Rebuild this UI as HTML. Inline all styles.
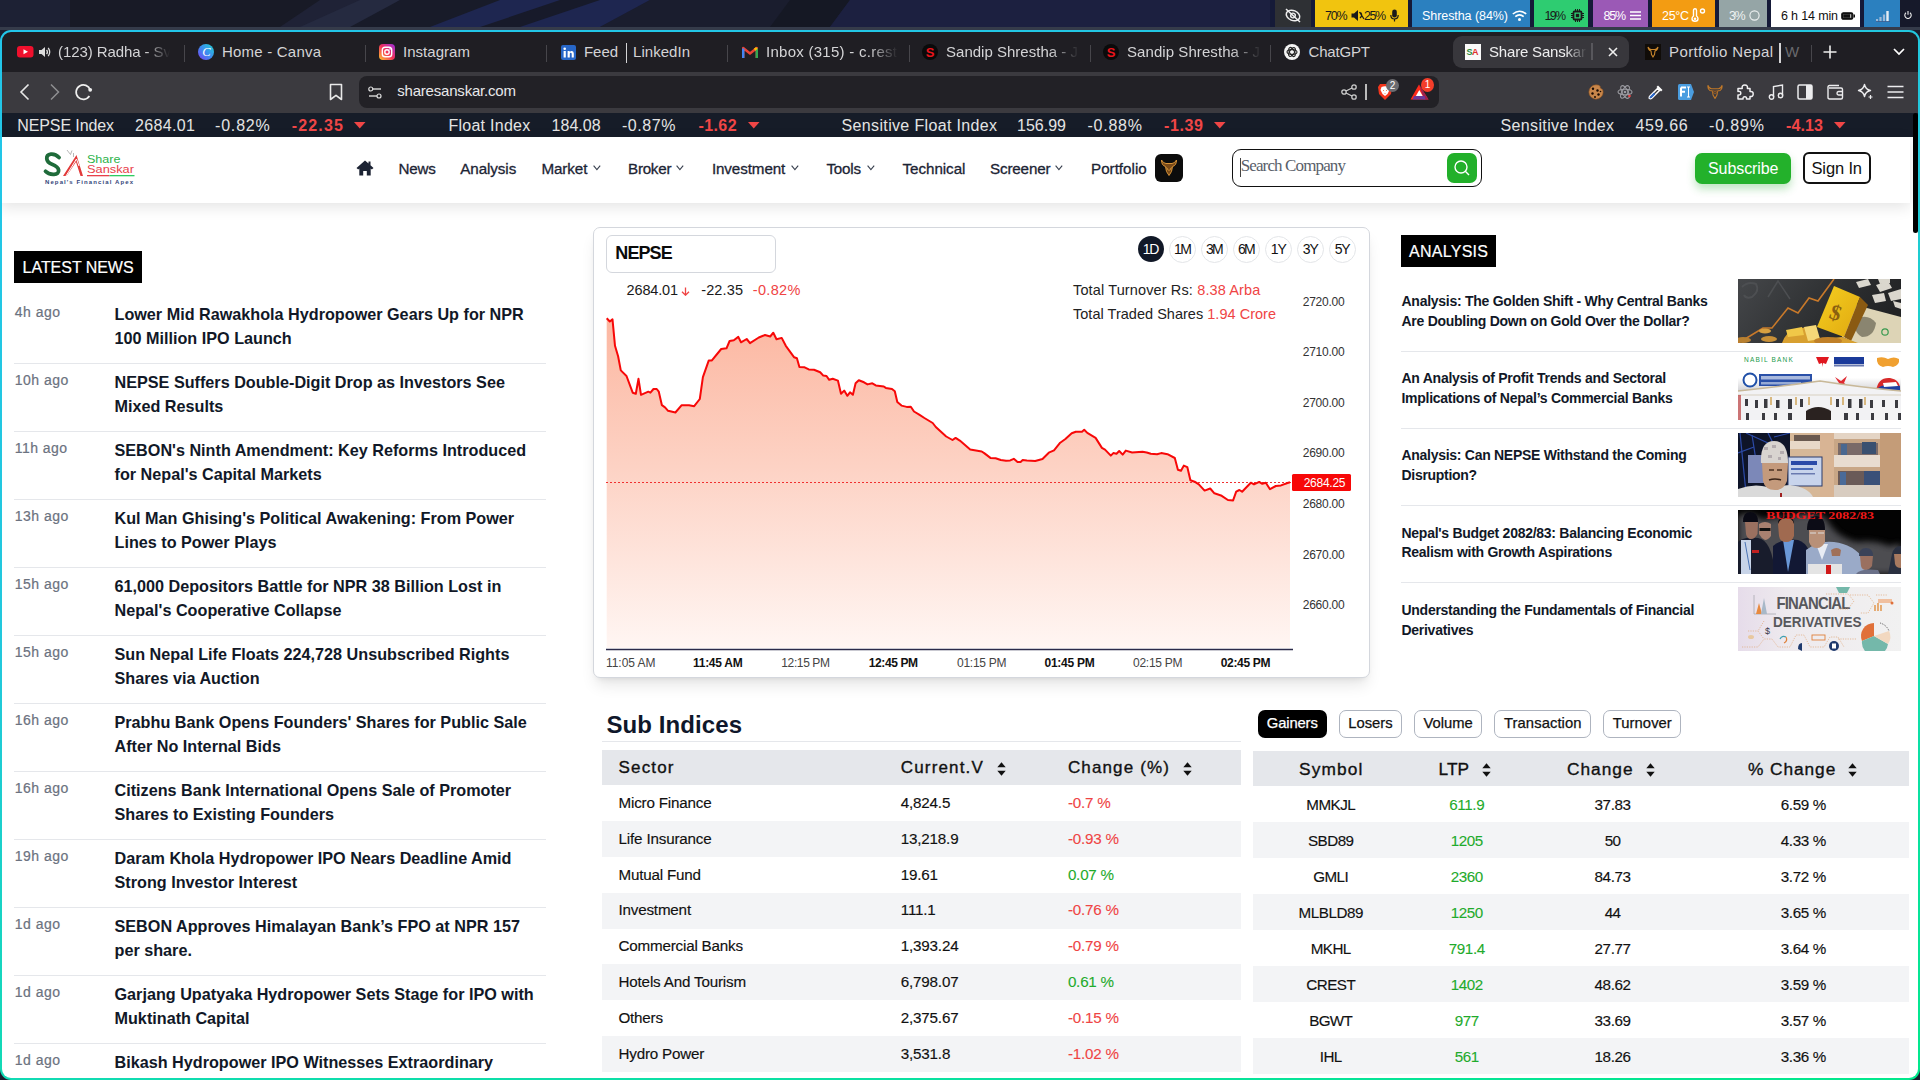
<!DOCTYPE html>
<html><head><meta charset="utf-8">
<style>
*{margin:0;padding:0;box-sizing:border-box}
html,body{width:1920px;height:1080px;overflow:hidden;background:#1b1e2e;font-family:"Liberation Sans",sans-serif}
.a{position:absolute;white-space:nowrap}
#win{position:absolute;left:0;top:30px;width:1920px;height:1050px;border-radius:11px;background:linear-gradient(165deg,#22c6ea 0%,#22c8dc 40%,#10dcb0 70%,#02e88c 100%)}
#inner{position:absolute;left:0;top:0;width:1920px;height:1080px;clip-path:inset(32px 2px 2px 2px round 9px)}
.fade{overflow:hidden}
</style></head><body>
<svg class="a" style="left:0;top:0" width="1920" height="30">
<rect width="1920" height="30" fill="#1c1f38"/>
<rect width="70" height="30" fill="#1d2134"/>
<rect x="70" width="250" height="30" fill="#181a26"/>
<path d="M320 0 L360 0 L320 27 L280 27Z" fill="#1f2236"/>
<path d="M360 0 L400 0 L360 27 L300 27Z" fill="#252a40"/>
<path d="M400 0 L520 0 L470 27 L350 27Z" fill="#181b29"/>
<path d="M500 0 L650 0 L600 27 L430 27Z" fill="#1e2650"/>
<path d="M560 0 L600 0 L520 27 L480 27Z" fill="#171a2a"/>
<path d="M650 0 L790 0 L780 27 L600 27Z" fill="#1a1d2e"/>
<path d="M790 0 L850 0 L830 27 L770 27Z" fill="#151824"/>
<path d="M850 0 L1275 0 L1275 27 L830 27Z" fill="#1c2040"/>
<rect x="1270" width="650" height="27" fill="#151a38"/>
<rect y="27" width="1920" height="3" fill="#353b4a"/>
</svg>
<div class="a" style="left:1275px;top:0px;width:36px;height:27px;background:#2e3034;"></div>
<div class="a" style="left:1315px;top:0px;width:93px;height:27px;background:#f1c40f;"></div>
<div class="a" style="left:1412px;top:0px;width:118px;height:27px;background:#2b80bf;"></div>
<div class="a" style="left:1534px;top:0px;width:54px;height:27px;background:#2ecc71;"></div>
<div class="a" style="left:1593px;top:0px;width:55px;height:27px;background:#9b59b6;"></div>
<div class="a" style="left:1652px;top:0px;width:63px;height:27px;background:#f39c12;"></div>
<div class="a" style="left:1719px;top:0px;width:48px;height:27px;background:#95a5a6;"></div>
<div class="a" style="left:1771px;top:0px;width:89px;height:27px;background:#ffffff;"></div>
<div class="a" style="left:1864px;top:0px;width:36px;height:27px;background:#2b80bf;"></div>
<div class="a" style="left:1900px;top:0px;width:20px;height:27px;background:#16192a;"></div>
<svg class="a" style="left:1284px;top:8px" width="18" height="15" viewBox="0 0 18 15"><g transform="rotate(22 9 7.5)"><ellipse cx="9" cy="7.5" rx="7" ry="5" fill="none" stroke="#eee" stroke-width="1.5"/><circle cx="9" cy="7.5" r="2.3" fill="none" stroke="#eee" stroke-width="1.4"/></g><path d="M2 1 L16 14" stroke="#eee" stroke-width="1.5"/></svg>
<div class="a" style="left:1325.00px;top:7.67px;font-size:12.5px;line-height:16px;color:#1a1a1a;letter-spacing:-1.159px;">70%</div>
<svg class="a" style="left:1351px;top:9px" width="14" height="13" viewBox="0 0 14 13"><path d="M0.5 4.5 H3 L7 1 V12 L3 8.5 H0.5Z" fill="#1a1a1a"/><path d="M8.5 3 L13 10 M9 9 Q12 6.5 9.5 3.5" fill="none" stroke="#1a1a1a" stroke-width="1.3"/></svg>
<div class="a" style="left:1364.00px;top:7.67px;font-size:12.5px;line-height:16px;color:#1a1a1a;letter-spacing:-1.509px;">25%</div>
<svg class="a" style="left:1390px;top:9px" width="9" height="13" viewBox="0 0 9 13"><rect x="2.2" y="0.5" width="4.6" height="8" rx="2.3" fill="#1a1a1a"/><path d="M0.8 6 Q0.8 10 4.5 10 Q8.2 10 8.2 6 M4.5 10 V12.5" fill="none" stroke="#1a1a1a" stroke-width="1.2"/></svg>
<div class="a" style="left:1422.00px;top:7.67px;font-size:12.5px;line-height:16px;color:#ffffff;letter-spacing:-0.065px;">Shrestha (84%)</div>
<svg class="a" style="left:1512px;top:10px" width="15" height="11" viewBox="0 0 15 11"><path d="M0.8 4 Q7.5 -1.5 14.2 4" fill="none" stroke="#fff" stroke-width="1.6"/><path d="M3.3 6.6 Q7.5 3 11.7 6.6" fill="none" stroke="#fff" stroke-width="1.6"/><circle cx="7.5" cy="9.5" r="1.5" fill="#fff"/></svg>
<div class="a" style="left:1544.50px;top:7.67px;font-size:12.5px;line-height:16px;color:#1a1a1a;letter-spacing:-1.759px;">19%</div>
<svg class="a" style="left:1571px;top:9px" width="13" height="13" viewBox="0 0 13 13"><rect x="2.5" y="2.5" width="8" height="8" rx="1" fill="none" stroke="#1a1a1a" stroke-width="1.8"/><rect x="4.8" y="4.8" width="3.4" height="3.4" fill="#1a1a1a"/><path d="M4.5 0 V2.5 M6.5 0 V2.5 M8.5 0 V2.5 M4.5 10.5 V13 M6.5 10.5 V13 M8.5 10.5 V13 M0 4.5 H2.5 M0 6.5 H2.5 M0 8.5 H2.5 M10.5 4.5 H13 M10.5 6.5 H13 M10.5 8.5 H13" stroke="#1a1a1a" stroke-width="1"/></svg>
<div class="a" style="left:1603.40px;top:7.67px;font-size:12.5px;line-height:16px;color:#ffffff;letter-spacing:-1.209px;">85%</div>
<svg class="a" style="left:1630px;top:11px" width="11" height="9"><path d="M0 1 H11 M0 4.5 H11 M0 8 H11" stroke="#fff" stroke-width="1.7"/></svg>
<div class="a" style="left:1662.00px;top:7.67px;font-size:12.5px;line-height:16px;color:#ffffff;letter-spacing:-0.309px;">25°C</div>
<svg class="a" style="left:1691px;top:8px" width="15" height="14" viewBox="0 0 15 14"><path d="M2.5 8 V2.5 Q2.5 0.8 4 0.8 Q5.5 0.8 5.5 2.5 V8 Q7 9.2 7 10.8 Q7 13.3 4 13.3 Q1 13.3 1 10.8 Q1 9.2 2.5 8Z" fill="none" stroke="#fff" stroke-width="1.4"/><circle cx="4" cy="10.8" r="1.3" fill="#fff"/><circle cx="11.5" cy="3" r="2" fill="none" stroke="#fff" stroke-width="1.4"/></svg>
<div class="a" style="left:1729.00px;top:7.67px;font-size:12.5px;line-height:16px;color:#eef2f2;letter-spacing:-1.566px;">3%</div>
<svg class="a" style="left:1749px;top:10px" width="11" height="11"><circle cx="5.5" cy="5.5" r="4.6" fill="none" stroke="#eef2f2" stroke-width="1.1"/></svg>
<div class="a" style="left:1781.00px;top:7.67px;font-size:12.5px;line-height:16px;color:#111111;letter-spacing:-0.152px;">6 h 14 min</div>
<svg class="a" style="left:1841px;top:12px" width="14" height="8"><rect x="0.8" y="0.8" width="11" height="6.4" rx="1.5" fill="#111" stroke="#111" stroke-width="1.2"/><rect x="12.5" y="2.5" width="1.5" height="3" fill="#111"/><rect x="2.2" y="2.2" width="8" height="3.6" fill="#ddd"/><rect x="2.2" y="2.2" width="7" height="3.6" fill="#111"/></svg>
<svg class="a" style="left:1876px;top:10px" width="14" height="12"><path d="M1 11.5 V9 M4.5 11.5 V7 M8 11.5 V4.5" stroke="#9ab8d8" stroke-width="2.2"/><path d="M11.5 11.5 V1" stroke="#e4ecf4" stroke-width="2.4"/><path d="M0 11.5 H14" stroke="#3a5a8a" stroke-width="0.8"/></svg>
<svg class="a" style="left:1904px;top:11px" width="8" height="8"><path d="M2 1.8 A3.2 3.2 0 1 0 6 1.8" fill="none" stroke="#eee" stroke-width="1.1"/><path d="M4 0 V3.8" stroke="#eee" stroke-width="1.1"/></svg>
<div id="win"></div>
<div id="inner">
<div class="a" style="left:0px;top:30px;width:1920px;height:42px;background:#1f1e23;"></div>
<div class="a" style="left:0px;top:72px;width:1920px;height:41px;background:#3b3a3f;"></div>
<div class="a" style="left:0px;top:113px;width:1920px;height:24px;background:#161c28;"></div>
<div class="a" style="left:1453px;top:36px;width:176px;height:32px;background:#38373c;border-radius:9px"></div>
<svg class="a" style="left:17px;top:46px" width="17" height="12"><rect width="16.5" height="11.5" rx="3" fill="#f0102d"/><path d="M6.5 3.3 L11 5.8 L6.5 8.3Z" fill="#fff"/></svg>
<svg class="a" style="left:38px;top:46px" width="13" height="12" viewBox="0 0 13 12"><path d="M1 4 H3.5 L7 1 V11 L3.5 8 H1Z" fill="#ddd"/><path d="M8.6 3.8 Q10.2 6 8.6 8.2" fill="none" stroke="#ddd" stroke-width="1.3"/><path d="M10.2 1.8 Q13.2 6 10.2 10.2" fill="none" stroke="#ddd" stroke-width="1.3"/></svg>
<div class="a" style="left:58.00px;top:42.00px;font-size:15px;line-height:20px;color:#d4d4d6;letter-spacing:-0.081px;overflow:hidden;width:112px;-webkit-mask-image:linear-gradient(90deg,#000 78%,transparent 100%);">(123) Radha - Sv</div>
<div class="a" style="left:184px;top:45px;width:1px;height:17px;background:#47464b;"></div>
<svg class="a" style="left:198px;top:44px" width="16" height="16"><defs><linearGradient id="cg" x1="0" y1="1" x2="1" y2="0"><stop offset="0" stop-color="#7b3ff2"/><stop offset="0.5" stop-color="#3b8ef0"/><stop offset="1" stop-color="#20d4d0"/></linearGradient></defs><circle cx="8" cy="8" r="8" fill="url(#cg)"/><text x="8.3" y="12.3" text-anchor="middle" font-size="12.5" font-style="italic" fill="#fff" font-family="Liberation Serif">C</text></svg>
<div class="a" style="left:222.00px;top:42.00px;font-size:15px;line-height:20px;color:#d4d4d6;letter-spacing:0.209px;">Home - Canva</div>
<div class="a" style="left:365px;top:45px;width:1px;height:17px;background:#47464b;"></div>
<svg class="a" style="left:379px;top:44px" width="16" height="16"><defs><linearGradient id="ig" x1="0" y1="1" x2="1" y2="0"><stop offset="0" stop-color="#fdc830"/><stop offset="0.5" stop-color="#f3305a"/><stop offset="1" stop-color="#9b30e0"/></linearGradient></defs><rect width="16" height="16" rx="4" fill="url(#ig)"/><rect x="3.3" y="3.3" width="9.4" height="9.4" rx="2.8" fill="none" stroke="#fff" stroke-width="1.4"/><circle cx="8" cy="8" r="2.2" fill="none" stroke="#fff" stroke-width="1.4"/><circle cx="11" cy="5" r="0.8" fill="#fff"/></svg>
<div class="a" style="left:403.00px;top:42.00px;font-size:15px;line-height:20px;color:#d4d4d6;letter-spacing:0.038px;">Instagram</div>
<div class="a" style="left:546px;top:45px;width:1px;height:17px;background:#47464b;"></div>
<svg class="a" style="left:561px;top:45px" width="15" height="15"><rect width="15" height="15" rx="2" fill="#2767c8"/><rect x="2.6" y="6" width="2.2" height="6.5" fill="#fff"/><circle cx="3.7" cy="3.8" r="1.3" fill="#fff"/><path d="M6.6 6 H8.7 V7 Q9.5 5.8 11 5.9 Q12.8 6 12.8 8.5 V12.5 H10.7 V9 Q10.7 7.8 9.7 7.8 Q8.8 7.8 8.8 9 V12.5 H6.6Z" fill="#fff"/></svg>
<div class="a" style="left:584.00px;top:42.00px;font-size:15px;line-height:20px;color:#d4d4d6;letter-spacing:-0.063px;">Feed</div>
<div class="a" style="left:625.5px;top:43px;width:1.8px;height:20px;background:#d4d4d6;"></div>
<div class="a" style="left:633.00px;top:42.00px;font-size:15px;line-height:20px;color:#d4d4d6;letter-spacing:0.041px;">LinkedIn</div>
<div class="a" style="left:727px;top:45px;width:1px;height:17px;background:#47464b;"></div>
<svg class="a" style="left:742px;top:46px" width="16" height="12" viewBox="0 0 16 12"><path d="M1.2 12 V2 L8 7.5 L14.8 2 V12" fill="none" stroke="#ea4335" stroke-width="2.4" stroke-linejoin="round"/><path d="M1.2 12 V2.5" stroke="#4285f4" stroke-width="2.4"/><path d="M14.8 12 V2.5" stroke="#34a853" stroke-width="2.4"/><path d="M12.5 3.8 L14.8 2" stroke="#fbbc04" stroke-width="2.4"/></svg>
<div class="a" style="left:766.00px;top:42.00px;font-size:15px;line-height:20px;color:#d4d4d6;letter-spacing:0.269px;overflow:hidden;width:132px;-webkit-mask-image:linear-gradient(90deg,#000 78%,transparent 100%);">Inbox (315) - c.rest</div>
<div class="a" style="left:909px;top:45px;width:1px;height:17px;background:#47464b;"></div>
<svg class="a" style="left:922px;top:44px" width="16" height="16"><circle cx="8" cy="8" r="8" fill="#0a0a0a"/><text x="8" y="12.8" text-anchor="middle" font-size="13" font-weight="bold" fill="#e8141c" font-family="Liberation Sans">S</text></svg>
<svg class="a" style="left:1103px;top:44px" width="16" height="16"><circle cx="8" cy="8" r="8" fill="#0a0a0a"/><text x="8" y="12.8" text-anchor="middle" font-size="13" font-weight="bold" fill="#e8141c" font-family="Liberation Sans">S</text></svg>
<div class="a" style="left:946.00px;top:42.00px;font-size:15px;line-height:20px;color:#d4d4d6;letter-spacing:0.014px;overflow:hidden;width:133px;-webkit-mask-image:linear-gradient(90deg,#000 78%,transparent 100%);">Sandip Shrestha - J</div>
<div class="a" style="left:1090px;top:45px;width:1px;height:17px;background:#47464b;"></div>
<div class="a" style="left:1127.00px;top:42.00px;font-size:15px;line-height:20px;color:#d4d4d6;letter-spacing:0.070px;overflow:hidden;width:134px;-webkit-mask-image:linear-gradient(90deg,#000 78%,transparent 100%);">Sandip Shrestha - J</div>
<div class="a" style="left:1270px;top:45px;width:1px;height:17px;background:#47464b;"></div>
<svg class="a" style="left:1284px;top:44px" width="16" height="16"><circle cx="8" cy="8" r="8" fill="#f4f4f4"/><g fill="none" stroke="#222" stroke-width="1.1"><ellipse cx="8" cy="8" rx="5" ry="2.4"/><ellipse cx="8" cy="8" rx="5" ry="2.4" transform="rotate(60 8 8)"/><ellipse cx="8" cy="8" rx="5" ry="2.4" transform="rotate(-60 8 8)"/></g></svg>
<div class="a" style="left:1308.50px;top:42.00px;font-size:15px;line-height:20px;color:#d4d4d6;letter-spacing:-0.170px;">ChatGPT</div>
<svg class="a" style="left:1465px;top:44px" width="16" height="16"><rect width="16" height="16" fill="#fafafa"/><text x="1.5" y="11" font-size="9" font-weight="bold" fill="#2a8a3a" font-family="Liberation Sans">S</text><text x="7" y="11" font-size="9" font-weight="bold" fill="#e0302a" font-family="Liberation Sans">A</text></svg>
<div class="a" style="left:1489.00px;top:42.00px;font-size:15px;line-height:20px;color:#eeeeef;letter-spacing:-0.185px;overflow:hidden;width:98px;-webkit-mask-image:linear-gradient(90deg,#000 78%,transparent 100%);">Share Sanskar</div>
<div class="a" style="left:1591px;top:43px;width:2px;height:17px;background:#58575c;"></div>
<svg class="a" style="left:1608px;top:47px" width="10" height="10"><path d="M1 1 L9 9 M9 1 L1 9" stroke="#eee" stroke-width="1.6"/></svg>
<svg class="a" style="left:1645px;top:44px" width="16" height="16"><rect width="16" height="16" fill="#100c08"/><path d="M3 3 Q3.5 6.5 6 7 L6.5 10.5 L8 13 L9.5 10.5 L10 7 Q12.5 6.5 13 3 Q11.5 5.5 9.5 5.5 H6.5 Q4.5 5.5 3 3Z" fill="none" stroke="#c8862c" stroke-width="1.1"/></svg>
<div class="a" style="left:1669.00px;top:42.00px;font-size:15px;line-height:20px;color:#d4d4d6;letter-spacing:0.401px;">Portfolio Nepal</div>
<div class="a" style="left:1779px;top:43px;width:2px;height:20px;background:#d4d4d6;"></div>
<div class="a" style="left:1785.00px;top:42.00px;font-size:15px;line-height:20px;color:#6a6a6e;overflow:hidden;width:16px;">W</div>
<div class="a" style="left:1811px;top:45px;width:1px;height:17px;background:#47464b;"></div>
<svg class="a" style="left:1823px;top:45px" width="14" height="14"><path d="M7 0.5 V13.5 M0.5 7 H13.5" stroke="#eee" stroke-width="1.6"/></svg>
<svg class="a" style="left:1893px;top:48px" width="12" height="8"><path d="M1 1 L6 6 L11 1" fill="none" stroke="#fff" stroke-width="1.7"/></svg>
<svg class="a" style="left:19px;top:83px" width="12" height="18"><path d="M9.5 1.5 L2 9 L9.5 16.5" fill="none" stroke="#e8e8e8" stroke-width="1.6"/></svg>
<svg class="a" style="left:49px;top:83px" width="12" height="18"><path d="M2 1.5 L9.5 9 L2 16.5" fill="none" stroke="#8e8e92" stroke-width="1.5"/></svg>
<svg class="a" style="left:74px;top:82px" width="20" height="20" viewBox="0 0 20 20"><path d="M16.2 8 A7.2 7.2 0 1 0 15.4 14" fill="none" stroke="#eee" stroke-width="1.7"/><circle cx="16.2" cy="7.8" r="1.9" fill="#eee"/></svg>
<svg class="a" style="left:329px;top:83px" width="14" height="18"><path d="M1.5 1.5 H12.5 V16.5 L7 12.3 L1.5 16.5Z" fill="none" stroke="#e8e8e8" stroke-width="1.6" stroke-linejoin="round"/></svg>
<div class="a" style="left:359px;top:76px;width:1080px;height:32px;background:#222126;border-radius:8px"></div>
<svg class="a" style="left:368px;top:86px" width="14" height="13"><line x1="4" y1="3" x2="13" y2="3" stroke="#ccc" stroke-width="1.3"/><circle cx="2.8" cy="3" r="2" fill="#222126" stroke="#ddd" stroke-width="1.2"/><line x1="1" y1="10" x2="9.5" y2="10" stroke="#ccc" stroke-width="1.3"/><circle cx="11" cy="10" r="2" fill="#222126" stroke="#ddd" stroke-width="1.2"/></svg>
<div class="a" style="left:397.20px;top:81.30px;font-size:15px;line-height:20px;color:#e8e8ea;letter-spacing:-0.195px;">sharesanskar.com</div>
<svg class="a" style="left:1341px;top:84px" width="16" height="16"><circle cx="3" cy="8" r="2.2" fill="none" stroke="#ccc" stroke-width="1.3"/><circle cx="13" cy="3" r="2.2" fill="none" stroke="#ccc" stroke-width="1.3"/><circle cx="13" cy="13" r="2.2" fill="none" stroke="#ccc" stroke-width="1.3"/><path d="M5 7 L11 4 M5 9 L11 12" stroke="#ccc" stroke-width="1.3"/></svg>
<div class="a" style="left:1365px;top:84px;width:1.5px;height:16px;background:#bbb;"></div>
<svg class="a" style="left:1377px;top:83px" width="16" height="18" viewBox="0 0 16 18"><path d="M3 1 H13 L15 4 L14 11 L8 17 L2 11 L1 4Z" fill="#f4361c"/><path d="M4.5 4 Q8 2.5 11.5 4 L12.5 7 L10.5 11 L8 13 L5.5 11 L3.5 7Z" fill="#fff"/><path d="M6 7 L7 8 M10 7 L9 8 M7.5 10.5 H8.5" stroke="#f08050" stroke-width="0.9"/></svg>
<div class="a" style="left:1386px;top:79px;width:13px;height:13px;border-radius:50%;background:#6b6b70;color:#fff;font-size:10px;line-height:13px;text-align:center">2</div>
<svg class="a" style="left:1410px;top:84px" width="19" height="16" viewBox="0 0 19 16"><path d="M9 0.5 L0.5 15.5 H18.5Z" fill="#ff2a1a"/><path d="M9 0.5 L18.5 15.5 H14Z" fill="#a02050"/><path d="M9.3 6 L13.5 13.5 H5Z" fill="#fff"/><path d="M4.2 12 H14.5 L15.5 15.5 H2.5Z" fill="#6a3a9a"/></svg>
<div class="a" style="left:1421px;top:78px;width:13px;height:14px;border-radius:50%;background:#f33d2a;color:#fff;font-size:10px;line-height:14px;text-align:center">1</div>
<svg class="a" style="left:1588px;top:84px" width="16" height="16" viewBox="0 0 16 16"><path d="M8 0.8 Q11 0.8 12.2 2.2 Q11.8 4.2 13.5 4.8 Q15.2 5.2 15.2 8 A7.2 7.2 0 1 1 8 0.8Z" fill="#c8864a" stroke="#8a5020" stroke-width="0.6"/><circle cx="5" cy="4.8" r="1.2" fill="#1a0c04"/><circle cx="9.5" cy="6.5" r="1.2" fill="#1a0c04"/><circle cx="4.5" cy="9.5" r="1.2" fill="#1a0c04"/><circle cx="10.5" cy="10.5" r="1.2" fill="#1a0c04"/><circle cx="7" cy="13" r="1" fill="#1a0c04"/><circle cx="12.5" cy="7.5" r="0.8" fill="#1a0c04"/></svg>
<svg class="a" style="left:1617px;top:84px" width="16" height="16"><g fill="none" stroke="#9a9aa0" stroke-width="1.1"><ellipse cx="8" cy="8" rx="7" ry="2.8"/><ellipse cx="8" cy="8" rx="7" ry="2.8" transform="rotate(60 8 8)"/><ellipse cx="8" cy="8" rx="7" ry="2.8" transform="rotate(-60 8 8)"/></g><circle cx="8" cy="8" r="1.3" fill="#9a9aa0"/><circle cx="12.5" cy="12" r="1.3" fill="#e44"/></svg>
<svg class="a" style="left:1648px;top:84px" width="16" height="16" viewBox="0 0 16 16"><path d="M10 1.5 L14.5 6 L13 7.5 L8.5 3Z" fill="#fff"/><path d="M9.5 4.5 L11.5 6.5 L4 14 Q2.5 15.2 1.5 14.5 Q0.8 13.5 2 12Z" fill="none" stroke="#fff" stroke-width="1.5" stroke-linejoin="round"/><path d="M6.5 9.5 L3 13 Q2.3 13.7 2.7 14" stroke="#2a6ad0" stroke-width="2"/></svg>
<svg class="a" style="left:1678px;top:84px" width="17" height="16" viewBox="0 0 17 16"><path d="M1.5 0 H13 L16 8 L13 16 H1.5 Q0 16 0 14.5 V1.5 Q0 0 1.5 0Z" fill="#4a9de0"/><path d="M3 3.5 V12.5 M3 3.5 H8 M3 7.8 H7" stroke="#fff" stroke-width="2"/><path d="M10.5 3 V13 M9 3 H12 M9 13 H12" stroke="#fff" stroke-width="1"/></svg>
<svg class="a" style="left:1707px;top:84px" width="16" height="16" viewBox="0 0 16 16"><path d="M1 1.5 Q0.5 5 3 6.5 L5.5 7 L6 11 L8 14.5 L10 11 L10.5 7 L13 6.5 Q15.5 5 15 1.5 Q14 4.5 11.5 4.8 H4.5 Q2 4.5 1 1.5Z" fill="none" stroke="#c07828" stroke-width="1.1" stroke-linejoin="round"/><path d="M5.5 7 L8 10 L10.5 7 M6.5 6 L8 8 L9.5 6" fill="none" stroke="#a06020" stroke-width="0.8"/></svg>
<svg class="a" style="left:1737px;top:84px" width="17" height="16" viewBox="0 0 17 16"><path d="M1 4.5 H5.2 Q4.6 1 7.8 1 Q11 1 10.4 4.5 H13 V7.5 Q16.2 7 16.2 10 Q16.2 13 13 12.5 V15 H9.5 Q10 12.8 7.8 12.8 Q5.6 12.8 6.1 15 H1 V11 Q3.8 11.3 3.8 9.2 Q3.8 7.1 1 7.4Z" fill="none" stroke="#f0f0f2" stroke-width="1.5" stroke-linejoin="round"/></svg>
<svg class="a" style="left:1768px;top:84px" width="16" height="16"><path d="M5.5 13 V2.5 L14.5 1 V11.5" fill="none" stroke="#ececee" stroke-width="1.4"/><circle cx="3.5" cy="13" r="2.2" fill="none" stroke="#ececee" stroke-width="1.4"/><circle cx="12.5" cy="11.5" r="2.2" fill="none" stroke="#ececee" stroke-width="1.4"/></svg>
<svg class="a" style="left:1797px;top:84px" width="16" height="16"><rect x="1" y="1" width="14" height="14" rx="1.5" fill="none" stroke="#ececee" stroke-width="1.5"/><rect x="9" y="1" width="6" height="14" fill="#ececee"/></svg>
<svg class="a" style="left:1827px;top:84px" width="17" height="16"><path d="M2 4 H14 Q15.5 4 15.5 5.5 V13.5 Q15.5 15 14 15 H2.5 Q1 15 1 13.5 V3 Q1 1.5 2.5 1.5 H12" fill="none" stroke="#ececee" stroke-width="1.4"/><path d="M15.5 7.5 H11.5 Q10 7.5 10 9.3 Q10 11 11.5 11 H15.5" fill="none" stroke="#ececee" stroke-width="1.4"/></svg>
<svg class="a" style="left:1857px;top:83px" width="17" height="17"><path d="M7.5 1.5 Q8.5 6.5 13.5 7.5 Q8.5 8.5 7.5 13.5 Q6.5 8.5 1.5 7.5 Q6.5 6.5 7.5 1.5Z" fill="none" stroke="#ececee" stroke-width="1.4" stroke-linejoin="round"/><path d="M13.5 12 V16 M11.5 14 H15.5" stroke="#ececee" stroke-width="1.2"/></svg>
<svg class="a" style="left:1887px;top:85px" width="17" height="14"><path d="M0.5 1.5 H16.5 M0.5 7 H16.5 M0.5 12.5 H16.5" stroke="#ececee" stroke-width="1.6"/></svg>
<div class="a" style="left:17.30px;top:114.96px;font-size:16px;line-height:21px;color:#e4e4e4;letter-spacing:-0.113px;">NEPSE Index</div>
<div class="a" style="left:135.00px;top:114.96px;font-size:16px;line-height:21px;color:#e4e4e4;letter-spacing:0.327px;">2684.01</div>
<div class="a" style="left:215.00px;top:114.96px;font-size:16px;line-height:21px;color:#e4e4e4;letter-spacing:0.821px;">-0.82%</div>
<div class="a" style="left:291.70px;top:114.96px;font-size:16px;line-height:21px;color:#f04646;font-weight:bold;letter-spacing:1.187px;">-22.35</div>
<div class="a" style="left:448.40px;top:114.96px;font-size:16px;line-height:21px;color:#e4e4e4;letter-spacing:0.274px;">Float Index</div>
<div class="a" style="left:551.60px;top:114.96px;font-size:16px;line-height:21px;color:#e4e4e4;letter-spacing:0.013px;">184.08</div>
<div class="a" style="left:621.90px;top:114.96px;font-size:16px;line-height:21px;color:#e4e4e4;letter-spacing:0.601px;">-0.87%</div>
<div class="a" style="left:698.40px;top:114.96px;font-size:16px;line-height:21px;color:#f04646;font-weight:bold;letter-spacing:0.433px;">-1.62</div>
<div class="a" style="left:841.60px;top:114.96px;font-size:16px;line-height:21px;color:#e4e4e4;letter-spacing:0.344px;">Sensitive Float Index</div>
<div class="a" style="left:1017.00px;top:114.96px;font-size:16px;line-height:21px;color:#e4e4e4;letter-spacing:0.013px;">156.99</div>
<div class="a" style="left:1087.50px;top:114.96px;font-size:16px;line-height:21px;color:#e4e4e4;letter-spacing:0.761px;">-0.88%</div>
<div class="a" style="left:1164.00px;top:114.96px;font-size:16px;line-height:21px;color:#f04646;font-weight:bold;letter-spacing:0.633px;">-1.39</div>
<div class="a" style="left:1500.60px;top:114.96px;font-size:16px;line-height:21px;color:#e4e4e4;letter-spacing:0.349px;">Sensitive Index</div>
<div class="a" style="left:1635.50px;top:114.96px;font-size:16px;line-height:21px;color:#e4e4e4;letter-spacing:0.633px;">459.66</div>
<div class="a" style="left:1709.00px;top:114.96px;font-size:16px;line-height:21px;color:#e4e4e4;letter-spacing:0.861px;">-0.89%</div>
<div class="a" style="left:1786.00px;top:114.96px;font-size:16px;line-height:21px;color:#f04646;font-weight:bold;letter-spacing:0.133px;">-4.13</div>
<svg class="a" style="left:354px;top:122px" width="12" height="7"><path d="M0 0 H11.5 L5.75 6.5Z" fill="#f04646"/></svg>
<svg class="a" style="left:747.8px;top:122px" width="12" height="7"><path d="M0 0 H11.5 L5.75 6.5Z" fill="#f04646"/></svg>
<svg class="a" style="left:1214px;top:122px" width="12" height="7"><path d="M0 0 H11.5 L5.75 6.5Z" fill="#f04646"/></svg>
<svg class="a" style="left:1834px;top:122px" width="12" height="7"><path d="M0 0 H11.5 L5.75 6.5Z" fill="#f04646"/></svg>
<div class="a" style="left:0px;top:137px;width:1920px;height:943px;background:#fff;"></div>
<div class="a" style="left:0px;top:137px;width:1910px;height:66px;background:#fff;box-shadow:0 4px 14px rgba(0,0,0,0.11)"></div>
<svg class="a" style="left:40px;top:148px" width="100" height="40" viewBox="0 0 100 40">
<path d="M19 9.5 Q15.5 5.8 11 6.2 Q6.5 6.8 6.8 10.8 Q7.2 14.5 12 16.3 Q18 18.6 18.6 22 Q19 26 14 26.3 Q8.5 26.6 5.5 23.3" fill="none" stroke="#1f6b3a" stroke-width="3.8" stroke-linecap="round"/>
<path d="M23 28 L36.5 7 L43 28 L40.5 28 L36 14 L26.5 28Z" fill="#e23a3a"/>
<path d="M26 28 L36.5 11 L39 18" fill="none" stroke="#fff" stroke-width="1"/>
<path d="M27 2 L30.5 6.5 L32 2.5 M33.5 5 L33.5 9" fill="none" stroke="#888" stroke-width="0.6"/>
<text x="47" y="14.5" font-size="10.5" fill="#2bb34a" font-family="Liberation Sans" textLength="33.5" lengthAdjust="spacingAndGlyphs">Share</text>
<text x="47" y="25.2" font-size="10.5" fill="#e8404a" font-family="Liberation Sans" textLength="47" lengthAdjust="spacingAndGlyphs">Sanskar</text>
<rect x="47" y="27" width="22.5" height="1.3" fill="#e8404a"/><rect x="69.5" y="27" width="25" height="1.3" fill="#2ecc60"/>
<text x="5" y="36" font-size="6" font-weight="bold" fill="#33467a" font-family="Liberation Sans" textLength="88" lengthAdjust="spacing">Nepal's Financial Apex</text>
</svg>
<svg class="a" style="left:356px;top:160px" width="18" height="16" viewBox="0 0 18 16"><path d="M9 0.5 L0.5 8 L2.2 9.6 L3.3 8.6 V15.5 H7.2 V11 H10.8 V15.5 H14.7 V8.6 L15.8 9.6 L17.5 8 L14.5 5.3 V1.5 H12.5 V3.5Z" fill="#1c2333"/></svg>
<div class="a" style="left:398.40px;top:158.93px;font-size:15.2px;line-height:20px;color:#1c2434;letter-spacing:-0.135px;-webkit-text-stroke:0.3px #1c2434;">News</div>
<div class="a" style="left:460.30px;top:158.93px;font-size:15.2px;line-height:20px;color:#1c2434;letter-spacing:-0.085px;-webkit-text-stroke:0.3px #1c2434;">Analysis</div>
<div class="a" style="left:541.40px;top:158.93px;font-size:15.2px;line-height:20px;color:#1c2434;letter-spacing:-0.091px;-webkit-text-stroke:0.3px #1c2434;">Market</div>
<div class="a" style="left:628.00px;top:158.93px;font-size:15.2px;line-height:20px;color:#1c2434;letter-spacing:-0.254px;-webkit-text-stroke:0.3px #1c2434;">Broker</div>
<div class="a" style="left:711.90px;top:158.93px;font-size:15.2px;line-height:20px;color:#1c2434;letter-spacing:-0.094px;-webkit-text-stroke:0.3px #1c2434;">Investment</div>
<div class="a" style="left:826.50px;top:158.93px;font-size:15.2px;line-height:20px;color:#1c2434;letter-spacing:-0.246px;-webkit-text-stroke:0.3px #1c2434;">Tools</div>
<div class="a" style="left:902.50px;top:158.93px;font-size:15.2px;line-height:20px;color:#1c2434;letter-spacing:-0.046px;-webkit-text-stroke:0.3px #1c2434;">Technical</div>
<div class="a" style="left:990.00px;top:158.93px;font-size:15.2px;line-height:20px;color:#1c2434;letter-spacing:-0.154px;-webkit-text-stroke:0.3px #1c2434;">Screener</div>
<div class="a" style="left:1091.00px;top:158.93px;font-size:15.2px;line-height:20px;color:#1c2434;-webkit-text-stroke:0.3px #1c2434;">Portfolio</div>
<svg class="a" style="left:593px;top:165px" width="8" height="6"><path d="M0.6 0.6 L3.9 4.6 L7.2 0.6" fill="none" stroke="#3a4250" stroke-width="1.1"/></svg>
<svg class="a" style="left:675.5px;top:165px" width="8" height="6"><path d="M0.6 0.6 L3.9 4.6 L7.2 0.6" fill="none" stroke="#3a4250" stroke-width="1.1"/></svg>
<svg class="a" style="left:790.6px;top:165px" width="8" height="6"><path d="M0.6 0.6 L3.9 4.6 L7.2 0.6" fill="none" stroke="#3a4250" stroke-width="1.1"/></svg>
<svg class="a" style="left:866.5px;top:165px" width="8" height="6"><path d="M0.6 0.6 L3.9 4.6 L7.2 0.6" fill="none" stroke="#3a4250" stroke-width="1.1"/></svg>
<svg class="a" style="left:1055.3px;top:165px" width="8" height="6"><path d="M0.6 0.6 L3.9 4.6 L7.2 0.6" fill="none" stroke="#3a4250" stroke-width="1.1"/></svg>
<div class="a" style="left:1155px;top:154px;width:28px;height:28px;background:#0c0c0c;border-radius:6px"></div>
<svg class="a" style="left:1159px;top:158px" width="20" height="20" viewBox="0 0 20 20"><path d="M2.5 2 Q2.5 7.5 6.5 8.5 L7.5 13.5 L10 17.5 L12.5 13.5 L13.5 8.5 Q17.5 7.5 17.5 2 Q15.5 5.5 13 5.5 H7 Q4.5 5.5 2.5 2Z" fill="#7a4a18" stroke="#d89438" stroke-width="1"/><path d="M7.5 9.5 L9.5 12.5 M12.5 9.5 L10.5 12.5" stroke="#e0a040" stroke-width="0.9"/></svg>
<div class="a" style="left:1231.5px;top:149px;width:250px;height:38px;background:#fff;border:1.5px solid #111;border-radius:9px"></div>
<div class="a" style="left:1240.70px;top:155.11px;font-size:17px;line-height:22px;color:#59606a;font-family:'Liberation Serif',serif;letter-spacing:-0.870px;">Search Company</div>
<div class="a" style="left:1240px;top:158px;width:1px;height:19px;background:#444;"></div>
<div class="a" style="left:1447px;top:153px;width:30px;height:30px;background:#22b02a;border-radius:7px"></div>
<svg class="a" style="left:1453px;top:159px" width="18" height="18"><circle cx="8" cy="8" r="6" fill="none" stroke="#fff" stroke-width="1.4"/><path d="M12.3 12.3 L16 16" stroke="#fff" stroke-width="1.4"/></svg>
<div class="a" style="left:1695px;top:153px;width:96px;height:31px;background:#23b12b;border-radius:7px;box-shadow:0 5px 8px rgba(40,170,50,0.3)"></div>
<div class="a" style="left:1708.00px;top:157.76px;font-size:16px;line-height:21px;color:#ffffff;letter-spacing:-0.081px;">Subscribe</div>
<div class="a" style="left:1803px;top:152px;width:68px;height:32px;background:#fff;border:2px solid #111;border-radius:6px"></div>
<div class="a" style="left:1811.50px;top:157.58px;font-size:16.5px;line-height:21px;color:#111111;letter-spacing:-0.145px;">Sign In</div>
<div class="a" style="left:1913px;top:113px;width:5px;height:120px;background:#000;border-radius:3px"></div>
<div class="a" style="left:14px;top:251px;width:128px;height:32px;background:#000;"></div>
<div class="a" style="left:22.60px;top:256.66px;font-size:16px;line-height:21px;color:#fff;letter-spacing:-0.043px;-webkit-text-stroke:0.2px #fff;">LATEST NEWS</div>
<div class="a" style="left:14.80px;top:303.45px;font-size:14px;line-height:18px;color:#6b7280;letter-spacing:0.476px;-webkit-text-stroke:0.2px #6b7280;">4h ago</div>
<div class="a" style="left:114.50px;top:304.29px;font-size:16.2px;line-height:21px;color:#111827;font-weight:bold;">Lower Mid Rawakhola Hydropower Gears Up for NPR</div>
<div class="a" style="left:114.50px;top:328.39px;font-size:16.2px;line-height:21px;color:#111827;font-weight:bold;">100 Million IPO Launch</div>
<div class="a" style="left:14px;top:363px;width:532px;height:1px;background:#e5e7eb;"></div>
<div class="a" style="left:14.80px;top:371.45px;font-size:14px;line-height:18px;color:#6b7280;letter-spacing:0.469px;-webkit-text-stroke:0.2px #6b7280;">10h ago</div>
<div class="a" style="left:114.50px;top:372.29px;font-size:16.2px;line-height:21px;color:#111827;font-weight:bold;">NEPSE Suffers Double-Digit Drop as Investors See</div>
<div class="a" style="left:114.50px;top:396.39px;font-size:16.2px;line-height:21px;color:#111827;font-weight:bold;">Mixed Results</div>
<div class="a" style="left:14px;top:431px;width:532px;height:1px;background:#e5e7eb;"></div>
<div class="a" style="left:14.80px;top:439.45px;font-size:14px;line-height:18px;color:#6b7280;letter-spacing:0.459px;-webkit-text-stroke:0.2px #6b7280;">11h ago</div>
<div class="a" style="left:114.50px;top:440.29px;font-size:16.2px;line-height:21px;color:#111827;font-weight:bold;">SEBON&#x27;s Ninth Amendment: Key Reforms Introduced</div>
<div class="a" style="left:114.50px;top:464.39px;font-size:16.2px;line-height:21px;color:#111827;font-weight:bold;">for Nepal&#x27;s Capital Markets</div>
<div class="a" style="left:14px;top:499px;width:532px;height:1px;background:#e5e7eb;"></div>
<div class="a" style="left:14.80px;top:507.45px;font-size:14px;line-height:18px;color:#6b7280;letter-spacing:0.469px;-webkit-text-stroke:0.2px #6b7280;">13h ago</div>
<div class="a" style="left:114.50px;top:508.29px;font-size:16.2px;line-height:21px;color:#111827;font-weight:bold;">Kul Man Ghising&#x27;s Political Awakening: From Power</div>
<div class="a" style="left:114.50px;top:532.39px;font-size:16.2px;line-height:21px;color:#111827;font-weight:bold;">Lines to Power Plays</div>
<div class="a" style="left:14px;top:567px;width:532px;height:1px;background:#e5e7eb;"></div>
<div class="a" style="left:14.80px;top:575.45px;font-size:14px;line-height:18px;color:#6b7280;letter-spacing:0.469px;-webkit-text-stroke:0.2px #6b7280;">15h ago</div>
<div class="a" style="left:114.50px;top:576.29px;font-size:16.2px;line-height:21px;color:#111827;font-weight:bold;">61,000 Depositors Battle for NPR 38 Billion Lost in</div>
<div class="a" style="left:114.50px;top:600.39px;font-size:16.2px;line-height:21px;color:#111827;font-weight:bold;">Nepal&#x27;s Cooperative Collapse</div>
<div class="a" style="left:14px;top:635px;width:532px;height:1px;background:#e5e7eb;"></div>
<div class="a" style="left:14.80px;top:643.45px;font-size:14px;line-height:18px;color:#6b7280;letter-spacing:0.469px;-webkit-text-stroke:0.2px #6b7280;">15h ago</div>
<div class="a" style="left:114.50px;top:644.29px;font-size:16.2px;line-height:21px;color:#111827;font-weight:bold;">Sun Nepal Life Floats 224,728 Unsubscribed Rights</div>
<div class="a" style="left:114.50px;top:668.39px;font-size:16.2px;line-height:21px;color:#111827;font-weight:bold;">Shares via Auction</div>
<div class="a" style="left:14px;top:703px;width:532px;height:1px;background:#e5e7eb;"></div>
<div class="a" style="left:14.80px;top:711.45px;font-size:14px;line-height:18px;color:#6b7280;letter-spacing:0.469px;-webkit-text-stroke:0.2px #6b7280;">16h ago</div>
<div class="a" style="left:114.50px;top:712.29px;font-size:16.2px;line-height:21px;color:#111827;font-weight:bold;">Prabhu Bank Opens Founders&#x27; Shares for Public Sale</div>
<div class="a" style="left:114.50px;top:736.39px;font-size:16.2px;line-height:21px;color:#111827;font-weight:bold;">After No Internal Bids</div>
<div class="a" style="left:14px;top:771px;width:532px;height:1px;background:#e5e7eb;"></div>
<div class="a" style="left:14.80px;top:779.45px;font-size:14px;line-height:18px;color:#6b7280;letter-spacing:0.469px;-webkit-text-stroke:0.2px #6b7280;">16h ago</div>
<div class="a" style="left:114.50px;top:780.29px;font-size:16.2px;line-height:21px;color:#111827;font-weight:bold;">Citizens Bank International Opens Sale of Promoter</div>
<div class="a" style="left:114.50px;top:804.39px;font-size:16.2px;line-height:21px;color:#111827;font-weight:bold;">Shares to Existing Founders</div>
<div class="a" style="left:14px;top:839px;width:532px;height:1px;background:#e5e7eb;"></div>
<div class="a" style="left:14.80px;top:847.45px;font-size:14px;line-height:18px;color:#6b7280;letter-spacing:0.469px;-webkit-text-stroke:0.2px #6b7280;">19h ago</div>
<div class="a" style="left:114.50px;top:848.29px;font-size:16.2px;line-height:21px;color:#111827;font-weight:bold;">Daram Khola Hydropower IPO Nears Deadline Amid</div>
<div class="a" style="left:114.50px;top:872.39px;font-size:16.2px;line-height:21px;color:#111827;font-weight:bold;">Strong Investor Interest</div>
<div class="a" style="left:14px;top:907px;width:532px;height:1px;background:#e5e7eb;"></div>
<div class="a" style="left:14.80px;top:915.45px;font-size:14px;line-height:18px;color:#6b7280;letter-spacing:0.476px;-webkit-text-stroke:0.2px #6b7280;">1d ago</div>
<div class="a" style="left:114.50px;top:916.29px;font-size:16.2px;line-height:21px;color:#111827;font-weight:bold;">SEBON Approves Himalayan Bank’s FPO at NPR 157</div>
<div class="a" style="left:114.50px;top:940.39px;font-size:16.2px;line-height:21px;color:#111827;font-weight:bold;">per share.</div>
<div class="a" style="left:14px;top:975px;width:532px;height:1px;background:#e5e7eb;"></div>
<div class="a" style="left:14.80px;top:983.45px;font-size:14px;line-height:18px;color:#6b7280;letter-spacing:0.476px;-webkit-text-stroke:0.2px #6b7280;">1d ago</div>
<div class="a" style="left:114.50px;top:984.29px;font-size:16.2px;line-height:21px;color:#111827;font-weight:bold;">Garjang Upatyaka Hydropower Sets Stage for IPO with</div>
<div class="a" style="left:114.50px;top:1008.39px;font-size:16.2px;line-height:21px;color:#111827;font-weight:bold;">Muktinath Capital</div>
<div class="a" style="left:14px;top:1043px;width:532px;height:1px;background:#e5e7eb;"></div>
<div class="a" style="left:14.80px;top:1051.45px;font-size:14px;line-height:18px;color:#6b7280;letter-spacing:0.476px;-webkit-text-stroke:0.2px #6b7280;">1d ago</div>
<div class="a" style="left:114.50px;top:1052.29px;font-size:16.2px;line-height:21px;color:#111827;font-weight:bold;">Bikash Hydropower IPO Witnesses Extraordinary</div>
<div class="a" style="left:593px;top:226.5px;width:777px;height:451px;background:#fff;border:1px solid #d4d7dd;border-radius:7px;box-shadow:0 10px 15px -3px rgba(0,0,0,0.1),0 4px 6px -4px rgba(0,0,0,0.1)"></div>
<div class="a" style="left:606px;top:235px;width:170px;height:38px;background:#fff;border:1px solid #d4d7dd;border-radius:6px"></div>
<div class="a" style="left:615.30px;top:242.26px;font-size:18px;line-height:23px;color:#0a0a0a;font-weight:bold;letter-spacing:-0.906px;">NEPSE</div>
<div class="a" style="left:1138.0px;top:236px;width:26px;height:26px;background:#111827;border-radius:50%"></div>
<div class="a" style="left:1142.75px;top:240.15px;font-size:14px;line-height:18px;color:#ffffff;letter-spacing:-1.397px;">1D</div>
<div class="a" style="left:1169.45px;top:235.5px;width:27px;height:27px;background:#fff;border:1px solid #e3e5e8;border-radius:50%"></div>
<div class="a" style="left:1174.10px;top:240.15px;font-size:14px;line-height:18px;color:#111111;letter-spacing:-1.748px;">1M</div>
<div class="a" style="left:1201.4px;top:235.5px;width:27px;height:27px;background:#fff;border:1px solid #e3e5e8;border-radius:50%"></div>
<div class="a" style="left:1206.05px;top:240.15px;font-size:14px;line-height:18px;color:#111111;letter-spacing:-1.748px;">3M</div>
<div class="a" style="left:1233.35px;top:235.5px;width:27px;height:27px;background:#fff;border:1px solid #e3e5e8;border-radius:50%"></div>
<div class="a" style="left:1238.00px;top:240.15px;font-size:14px;line-height:18px;color:#111111;letter-spacing:-1.748px;">6M</div>
<div class="a" style="left:1265.3px;top:235.5px;width:27px;height:27px;background:#fff;border:1px solid #e3e5e8;border-radius:50%"></div>
<div class="a" style="left:1270.80px;top:240.15px;font-size:14px;line-height:18px;color:#111111;letter-spacing:-1.123px;">1Y</div>
<div class="a" style="left:1297.25px;top:235.5px;width:27px;height:27px;background:#fff;border:1px solid #e3e5e8;border-radius:50%"></div>
<div class="a" style="left:1302.75px;top:240.15px;font-size:14px;line-height:18px;color:#111111;letter-spacing:-1.123px;">3Y</div>
<div class="a" style="left:1329.2px;top:235.5px;width:27px;height:27px;background:#fff;border:1px solid #e3e5e8;border-radius:50%"></div>
<div class="a" style="left:1334.70px;top:240.15px;font-size:14px;line-height:18px;color:#111111;letter-spacing:-1.123px;">5Y</div>
<div class="a" style="left:626.60px;top:281.08px;font-size:14.5px;line-height:19px;color:#1a1a1a;letter-spacing:-0.169px;">2684.01</div>
<svg class="a" style="left:681px;top:287px" width="9" height="9"><path d="M4.5 0.5 V8 M1 4.8 L4.5 8.2 L8 4.8" fill="none" stroke="#ef4444" stroke-width="1.3"/></svg>
<div class="a" style="left:701.20px;top:281.08px;font-size:14.5px;line-height:19px;color:#1a1a1a;letter-spacing:0.138px;">-22.35</div>
<div class="a" style="left:752.80px;top:281.08px;font-size:14.5px;line-height:19px;color:#ef4444;letter-spacing:0.312px;">-0.82%</div>
<div class="a" style="left:1073px;top:280.88px;font-size:14.5px;line-height:19px;letter-spacing:0.131px"><span style="color:#222">Total Turnover Rs: </span><span style="color:#ef4444">8.38 Arba</span></div>
<div class="a" style="left:1073px;top:304.78px;font-size:14.5px;line-height:19px;letter-spacing:0.024px"><span style="color:#222">Total Traded Shares </span><span style="color:#ef4444">1.94 Crore</span></div>
<svg class="a" style="left:0;top:0" width="1920" height="700">
<defs><linearGradient id="fg" x1="0" y1="318" x2="0" y2="648" gradientUnits="userSpaceOnUse"><stop offset="0" stop-color="#fcb7a1"/><stop offset="0.45" stop-color="#fdd2c4"/><stop offset="1" stop-color="#fff6f3"/></linearGradient></defs>
<path d="M606.7,318.3 L609.8,321.5 L612.5,319.4 L615.0,345.8 L618.1,356.3 L620.8,370.4 L626.5,376.0 L632.7,392.7 L635.8,393.8 L638.5,378.8 L641.0,394.8 L648.3,391.7 L650.4,392.7 L653.5,389.0 L656.7,389.0 L658.8,391.7 L661.9,405.2 L665.0,407.3 L668.1,410.8 L675.4,412.5 L681.7,405.2 L689.0,405.2 L694.2,406.2 L699.8,399.0 L702.9,377.1 L708.8,360.4 L711.9,360.4 L721.2,349.0 L726.5,348.3 L729.6,341.0 L733.8,340.2 L738.3,336.9 L741.0,342.3 L746.7,339.0 L750.0,343.1 L758.8,337.5 L765.0,335.0 L770.2,336.5 L773.3,332.7 L776.5,339.2 L781.7,337.9 L785.8,345.8 L794.2,357.3 L796.9,358.3 L799.4,367.1 L804.6,367.3 L808.8,369.4 L814.0,369.8 L820.2,372.3 L823.3,375.6 L826.5,376.0 L829.2,379.8 L832.7,378.8 L837.9,380.6 L841.0,393.8 L844.2,390.6 L847.3,395.8 L850.0,392.3 L852.9,394.8 L855.6,383.3 L858.8,380.2 L864.0,382.3 L867.5,384.4 L872.3,383.3 L875.8,385.4 L883.8,386.5 L885.8,387.9 L892.0,389.0 L894.8,391.2 L897.3,402.0 L901.5,405.6 L906.7,406.9 L910.8,406.7 L914.0,411.5 L919.2,414.6 L924.4,418.0 L932.7,423.0 L935.8,427.0 L946.2,436.5 L952.5,440.0 L955.6,437.9 L959.8,440.6 L970.2,449.6 L981.7,451.5 L984.2,453.1 L990.4,457.9 L995.6,458.3 L1000.8,460.0 L1006.0,460.8 L1010.2,460.4 L1013.8,458.8 L1017.5,461.9 L1020.6,461.9 L1022.7,460.0 L1026.9,460.4 L1035.2,461.0 L1042.5,459.0 L1048.8,452.7 L1054.0,450.4 L1060.2,442.7 L1065.4,439.0 L1071.7,433.3 L1075.8,431.7 L1082.0,431.7 L1084.2,429.8 L1087.3,432.9 L1095.6,437.9 L1101.9,447.9 L1105.0,449.6 L1110.8,455.6 L1113.3,453.1 L1116.5,453.8 L1119.2,451.0 L1122.7,454.6 L1125.8,450.6 L1132.1,452.5 L1142.5,451.7 L1146.7,452.5 L1150.8,453.8 L1157.1,454.2 L1161.2,453.1 L1167.5,454.2 L1174.8,458.0 L1177.9,469.8 L1181.0,470.8 L1183.8,465.6 L1187.3,467.1 L1190.4,480.2 L1194.6,481.7 L1198.8,484.4 L1204.6,490.6 L1210.2,488.5 L1214.4,493.3 L1221.7,495.8 L1227.9,500.0 L1233.1,500.4 L1236.2,491.7 L1239.4,490.0 L1242.1,491.7 L1250.8,482.7 L1254.0,484.4 L1259.2,481.9 L1262.3,483.8 L1265.8,482.7 L1270.0,489.2 L1275.8,486.0 L1281.0,485.4 L1288.3,482.7 L1290.0,482.2 L1290.0,648 L606.7,648 Z" fill="url(#fg)"/>
<line x1="606" y1="482.5" x2="1291" y2="482.5" stroke="#f03030" stroke-width="1" stroke-dasharray="2 2"/>
<path d="M606.7,318.3 L609.8,321.5 L612.5,319.4 L615.0,345.8 L618.1,356.3 L620.8,370.4 L626.5,376.0 L632.7,392.7 L635.8,393.8 L638.5,378.8 L641.0,394.8 L648.3,391.7 L650.4,392.7 L653.5,389.0 L656.7,389.0 L658.8,391.7 L661.9,405.2 L665.0,407.3 L668.1,410.8 L675.4,412.5 L681.7,405.2 L689.0,405.2 L694.2,406.2 L699.8,399.0 L702.9,377.1 L708.8,360.4 L711.9,360.4 L721.2,349.0 L726.5,348.3 L729.6,341.0 L733.8,340.2 L738.3,336.9 L741.0,342.3 L746.7,339.0 L750.0,343.1 L758.8,337.5 L765.0,335.0 L770.2,336.5 L773.3,332.7 L776.5,339.2 L781.7,337.9 L785.8,345.8 L794.2,357.3 L796.9,358.3 L799.4,367.1 L804.6,367.3 L808.8,369.4 L814.0,369.8 L820.2,372.3 L823.3,375.6 L826.5,376.0 L829.2,379.8 L832.7,378.8 L837.9,380.6 L841.0,393.8 L844.2,390.6 L847.3,395.8 L850.0,392.3 L852.9,394.8 L855.6,383.3 L858.8,380.2 L864.0,382.3 L867.5,384.4 L872.3,383.3 L875.8,385.4 L883.8,386.5 L885.8,387.9 L892.0,389.0 L894.8,391.2 L897.3,402.0 L901.5,405.6 L906.7,406.9 L910.8,406.7 L914.0,411.5 L919.2,414.6 L924.4,418.0 L932.7,423.0 L935.8,427.0 L946.2,436.5 L952.5,440.0 L955.6,437.9 L959.8,440.6 L970.2,449.6 L981.7,451.5 L984.2,453.1 L990.4,457.9 L995.6,458.3 L1000.8,460.0 L1006.0,460.8 L1010.2,460.4 L1013.8,458.8 L1017.5,461.9 L1020.6,461.9 L1022.7,460.0 L1026.9,460.4 L1035.2,461.0 L1042.5,459.0 L1048.8,452.7 L1054.0,450.4 L1060.2,442.7 L1065.4,439.0 L1071.7,433.3 L1075.8,431.7 L1082.0,431.7 L1084.2,429.8 L1087.3,432.9 L1095.6,437.9 L1101.9,447.9 L1105.0,449.6 L1110.8,455.6 L1113.3,453.1 L1116.5,453.8 L1119.2,451.0 L1122.7,454.6 L1125.8,450.6 L1132.1,452.5 L1142.5,451.7 L1146.7,452.5 L1150.8,453.8 L1157.1,454.2 L1161.2,453.1 L1167.5,454.2 L1174.8,458.0 L1177.9,469.8 L1181.0,470.8 L1183.8,465.6 L1187.3,467.1 L1190.4,480.2 L1194.6,481.7 L1198.8,484.4 L1204.6,490.6 L1210.2,488.5 L1214.4,493.3 L1221.7,495.8 L1227.9,500.0 L1233.1,500.4 L1236.2,491.7 L1239.4,490.0 L1242.1,491.7 L1250.8,482.7 L1254.0,484.4 L1259.2,481.9 L1262.3,483.8 L1265.8,482.7 L1270.0,489.2 L1275.8,486.0 L1281.0,485.4 L1288.3,482.7 L1290.0,482.2" fill="none" stroke="#f70808" stroke-width="2" stroke-linejoin="round"/>
<line x1="606" y1="649.5" x2="1293" y2="649.5" stroke="#2b2b4a" stroke-width="1.3"/>
<rect x="1292" y="474" width="59" height="17" rx="1.5" fill="#f70808"/>
</svg>
<div class="a" style="left:1303.70px;top:474.84px;font-size:12px;line-height:16px;color:#ffffff;letter-spacing:-0.263px;">2684.25</div>
<div class="a" style="left:1302.80px;top:293.84px;font-size:12px;line-height:16px;color:#333333;letter-spacing:-0.263px;">2720.00</div>
<div class="a" style="left:1302.80px;top:344.39px;font-size:12px;line-height:16px;color:#333333;letter-spacing:-0.263px;">2710.00</div>
<div class="a" style="left:1302.80px;top:394.94px;font-size:12px;line-height:16px;color:#333333;letter-spacing:-0.263px;">2700.00</div>
<div class="a" style="left:1302.80px;top:445.49px;font-size:12px;line-height:16px;color:#333333;letter-spacing:-0.263px;">2690.00</div>
<div class="a" style="left:1302.80px;top:496.04px;font-size:12px;line-height:16px;color:#333333;letter-spacing:-0.263px;">2680.00</div>
<div class="a" style="left:1302.80px;top:546.59px;font-size:12px;line-height:16px;color:#333333;letter-spacing:-0.263px;">2670.00</div>
<div class="a" style="left:1302.80px;top:597.14px;font-size:12px;line-height:16px;color:#333333;letter-spacing:-0.263px;">2660.00</div>
<div class="a" style="left:606.00px;top:654.84px;font-size:12px;line-height:16px;color:#444444;letter-spacing:-0.044px;">11:05 AM</div>
<div class="a" style="left:693.00px;top:654.84px;font-size:12px;line-height:16px;color:#111111;font-weight:bold;letter-spacing:-0.269px;">11:45 AM</div>
<div class="a" style="left:781.30px;top:654.84px;font-size:12px;line-height:16px;color:#444444;letter-spacing:-0.381px;">12:15 PM</div>
<div class="a" style="left:868.80px;top:654.84px;font-size:12px;line-height:16px;color:#111111;font-weight:bold;letter-spacing:-0.404px;">12:45 PM</div>
<div class="a" style="left:957.00px;top:654.84px;font-size:12px;line-height:16px;color:#444444;letter-spacing:-0.266px;">01:15 PM</div>
<div class="a" style="left:1044.50px;top:654.84px;font-size:12px;line-height:16px;color:#111111;font-weight:bold;letter-spacing:-0.261px;">01:45 PM</div>
<div class="a" style="left:1133.00px;top:654.84px;font-size:12px;line-height:16px;color:#444444;letter-spacing:-0.266px;">02:15 PM</div>
<div class="a" style="left:1220.70px;top:654.84px;font-size:12px;line-height:16px;color:#111111;font-weight:bold;letter-spacing:-0.318px;">02:45 PM</div>
<div class="a" style="left:1401px;top:235px;width:95px;height:32px;background:#000;"></div>
<div class="a" style="left:1409.00px;top:240.66px;font-size:16px;line-height:21px;color:#fff;letter-spacing:0.276px;-webkit-text-stroke:0.2px #fff;">ANALYSIS</div>
<div class="a" style="left:1401.50px;top:291.85px;font-size:14px;line-height:18px;color:#111827;font-weight:bold;letter-spacing:-0.263px;">Analysis: The Golden Shift - Why Central Banks</div>
<div class="a" style="left:1401.50px;top:311.55px;font-size:14px;line-height:18px;color:#111827;font-weight:bold;letter-spacing:-0.272px;">Are Doubling Down on Gold Over the Dollar?</div>
<div class="a" style="left:1401px;top:351px;width:500px;height:1px;background:#e5e7eb;"></div>
<div class="a" style="left:1401.50px;top:369.15px;font-size:14px;line-height:18px;color:#111827;font-weight:bold;letter-spacing:-0.256px;">An Analysis of Profit Trends and Sectoral</div>
<div class="a" style="left:1401.50px;top:388.85px;font-size:14px;line-height:18px;color:#111827;font-weight:bold;letter-spacing:-0.269px;">Implications of Nepal’s Commercial Banks</div>
<div class="a" style="left:1401px;top:428px;width:500px;height:1px;background:#e5e7eb;"></div>
<div class="a" style="left:1401.50px;top:446.45px;font-size:14px;line-height:18px;color:#111827;font-weight:bold;letter-spacing:-0.283px;">Analysis: Can NEPSE Withstand the Coming</div>
<div class="a" style="left:1401.50px;top:466.15px;font-size:14px;line-height:18px;color:#111827;font-weight:bold;letter-spacing:-0.293px;">Disruption?</div>
<div class="a" style="left:1401px;top:505px;width:500px;height:1px;background:#e5e7eb;"></div>
<div class="a" style="left:1401.50px;top:523.75px;font-size:14px;line-height:18px;color:#111827;font-weight:bold;letter-spacing:-0.274px;">Nepal&#x27;s Budget 2082/83: Balancing Economic</div>
<div class="a" style="left:1401.50px;top:543.45px;font-size:14px;line-height:18px;color:#111827;font-weight:bold;letter-spacing:-0.272px;">Realism with Growth Aspirations</div>
<div class="a" style="left:1401px;top:582px;width:500px;height:1px;background:#e5e7eb;"></div>
<div class="a" style="left:1401.50px;top:601.05px;font-size:14px;line-height:18px;color:#111827;font-weight:bold;letter-spacing:-0.270px;">Understanding the Fundamentals of Financial</div>
<div class="a" style="left:1401.50px;top:620.75px;font-size:14px;line-height:18px;color:#111827;font-weight:bold;letter-spacing:-0.278px;">Derivatives</div>
<svg class="a" style="left:1738px;top:279px" width="163" height="64" viewBox="0 0 163 64">
<defs><linearGradient id="g1bg" x1="0" y1="0" x2="1" y2="0.3"><stop offset="0" stop-color="#45474a"/><stop offset="0.6" stop-color="#2e3032"/><stop offset="1" stop-color="#222325"/></linearGradient>
<linearGradient id="g1bar" x1="0" y1="0" x2="1" y2="1"><stop offset="0" stop-color="#f5cf20"/><stop offset="1" stop-color="#e0a810"/></linearGradient></defs>
<rect width="163" height="64" fill="url(#g1bg)"/>
<path d="M4 8 Q10 2 18 5 Q22 12 14 18 Q8 20 6 16" fill="none" stroke="#4d4f52" stroke-width="2"/>
<path d="M30 18 L40 2 L52 20" fill="none" stroke="#4d4f52" stroke-width="1.5"/>
<path d="M0 64 L12 57 L25 49 L34 49 L50 29 L60 34 L71 19 L80 22 L96 0" fill="none" stroke="#c8792a" stroke-width="1.6"/>
<g fill="#eeeae0" opacity="0.9"><path d="M118 3 L130 0 L133 6 L121 9Z"/><path d="M138 6 L150 2 L154 9 L142 13Z"/><path d="M150 14 L163 10 L163 20 L153 22Z"/><path d="M134 16 L146 14 L148 22 L137 24Z"/><path d="M140 0 L152 0 L152 4 L142 5Z"/><path d="M155 22 L163 24 L163 30 L157 28Z"/></g>
<path d="M110 24 L163 38 L163 64 L118 64 L104 58Z" fill="#ddd4b6"/>
<path d="M118 40 Q130 34 138 44 Q136 58 124 58 Q114 52 118 40Z" fill="#8a8570"/>
<circle cx="147" cy="53" r="3.2" fill="none" stroke="#3a9a50" stroke-width="1.2"/>
<path d="M96 7 L122 18 L106 58 L79 48Z" fill="url(#g1bar)"/>
<path d="M122 18 L130 26 L113 62 L106 58Z" fill="#8a5a12"/>
<text x="92" y="42" font-size="22" font-weight="bold" fill="#8a6010" font-family="Liberation Serif" transform="rotate(20 100 35)">$</text>
<path d="M44 64 Q48 52 60 50 L68 48 L78 52 L82 60 L104 58 L120 64Z" fill="#d8a030"/>
<path d="M48 51 L64 48 L66 56 L50 58Z" fill="#f0c848"/>
<path d="M66 48 L78 46 L82 60 L70 62Z" fill="#f5d878"/>
<ellipse cx="31" cy="60" rx="8" ry="3" fill="#c89038"/><ellipse cx="5" cy="61" rx="8" ry="3" fill="#b88030"/><ellipse cx="27" cy="52" rx="6" ry="2.5" fill="#d8a040"/>
<ellipse cx="90" cy="62" rx="14" ry="4" fill="#c08028"/>
</svg>
<svg class="a" style="left:1738px;top:355px" width="163" height="65" viewBox="0 0 163 65">
<defs><linearGradient id="g2sky" x1="0" y1="0" x2="0" y2="1"><stop offset="0.35" stop-color="#ffffff"/><stop offset="0.6" stop-color="#c8c8cc"/><stop offset="1" stop-color="#e8e8ea"/></linearGradient></defs>
<rect width="163" height="65" fill="url(#g2sky)"/>
<text x="6" y="6.5" font-size="6.5" fill="#1a9a4a" font-family="Liberation Sans" letter-spacing="1.2">NABIL BANK</text>
<path d="M78 2 H91 L88 9 L85 8 L84.5 12 L84 8 L81 9Z" fill="#e01820"/>
<rect x="96" y="2" width="30" height="7" fill="#1a3a9a"/><rect x="96" y="9.5" width="30" height="2" fill="#6a7ab0"/>
<path d="M139 3 Q145 1 150 4 Q156 1 161 4 Q162 10 155 12 Q150 10 145 12 Q138 10 139 3Z" fill="#f0a030"/>
<circle cx="12" cy="25" r="6.5" fill="#fff" stroke="#2050a8" stroke-width="2"/>
<rect x="21" y="19" width="53" height="12" fill="#2a50a8"/><rect x="23" y="21" width="49" height="3.5" fill="#dfe6f4" opacity="0.7"/><rect x="23" y="27" width="40" height="2.5" fill="#dfe6f4" opacity="0.6"/>
<path d="M97 22 L103 26 L109 21 L106 28 L110 31 L103 30 L99 33 L101 28Z" fill="#e02830"/>
<path d="M138 36 Q140 22 152 23 Q163 25 162 36Z" fill="#d82a2a"/><path d="M140 33 Q145 28 162 31 L162 36 L142 38Z" fill="#2040a0"/><path d="M145 28 L158 27 L160 31 L146 32Z" fill="#fff"/>
<path d="M0 36 Q40 32 82 26 Q120 32 163 36 V65 H0Z" fill="#f2f2f4"/>
<path d="M0 36 Q40 32 82 26 Q120 32 163 36" fill="none" stroke="#c8b898" stroke-width="1.5"/>
<path d="M0 40 H163" stroke="#d8d0c0" stroke-width="1"/>
<g fill="#3a3a40"><rect x="7" y="44" width="3" height="7"/><rect x="17" y="45" width="3" height="8"/><rect x="26" y="44" width="3.5" height="9"/><rect x="38" y="45" width="3.5" height="8"/><rect x="50" y="44" width="4" height="10"/><rect x="62" y="44" width="3" height="8"/><rect x="98" y="44" width="3" height="8"/><rect x="110" y="44" width="3.5" height="9"/><rect x="121" y="44" width="3.5" height="9"/><rect x="132" y="45" width="3" height="8"/><rect x="144" y="45" width="3" height="7"/><rect x="157" y="45" width="3" height="8"/></g>
<g fill="#d8b880"><rect x="32" y="42" width="2" height="8"/><rect x="57" y="42" width="2" height="8"/><rect x="70" y="42" width="2" height="8"/><rect x="92" y="42" width="2" height="8"/><rect x="104" y="42" width="2" height="8"/><rect x="126" y="42" width="2" height="8"/></g>
<path d="M68 65 V56 Q80 48 93 56 V65Z" fill="#2a2220"/>
<g fill="#3a3a40"><rect x="8" y="58" width="3" height="7"/><rect x="24" y="58" width="3" height="7"/><rect x="36" y="58" width="3" height="7"/><rect x="50" y="58" width="4" height="7"/><rect x="106" y="58" width="4" height="7"/><rect x="118" y="58" width="3" height="7"/><rect x="133" y="58" width="3" height="7"/><rect x="147" y="58" width="3" height="7"/><rect x="160" y="58" width="3" height="7"/></g>
<rect x="0" y="40" width="3" height="25" fill="#b02020" opacity="0.6"/>
</svg>
<svg class="a" style="left:1738px;top:433px" width="163" height="64" viewBox="0 0 163 64">
<rect width="163" height="64" fill="#c8a686"/>
<rect x="0" width="52" height="64" fill="#0e1428"/>
<g stroke="#3458c8" stroke-width="1.2" opacity="0.8"><path d="M2 0 L8 60"/><path d="M8 0 L30 10"/><path d="M14 2 L20 40"/><path d="M30 0 L40 20"/><path d="M0 20 L16 14"/><path d="M36 4 L52 0"/></g>
<rect x="10" y="22" width="16" height="28" fill="#7c88b8"/>
<rect x="52" width="30" height="64" fill="#d6b898"/>
<rect x="56" y="2" width="26" height="6" fill="#6a5a50"/>
<rect x="52" y="8" width="30" height="8" fill="#e8d8c8"/>
<rect x="82" y="0" width="14" height="64" fill="#d8b494"/>
<rect x="96" y="0" width="46" height="6" fill="#e4d4c4"/>
<rect x="100" y="10" width="40" height="14" fill="#7a6a68"/><rect x="103" y="11" width="6" height="11" fill="#4a6890"/><rect x="124" y="9" width="14" height="12" fill="#3a5070"/>
<rect x="96" y="22" width="48" height="12" fill="#e8dcd0"/>
<rect x="100" y="38" width="44" height="16" fill="#6a5a58"/><rect x="102" y="39" width="6" height="14" fill="#4a6a98"/><rect x="126" y="38" width="16" height="14" fill="#3a5078"/>
<rect x="96" y="52" width="50" height="12" fill="#d8ccc0"/>
<rect x="142" y="0" width="21" height="64" fill="#c49c78"/>
<rect x="50" y="24" width="34" height="29" fill="#c8d4ec" stroke="#2a3a6a" stroke-width="1"/>
<rect x="53" y="28" width="26" height="4" fill="#2a4aa8"/><rect x="53" y="35" width="22" height="2" fill="#4a6ab8"/><rect x="53" y="40" width="24" height="1.5" fill="#6a7ab0"/>
<path d="M0 64 V56 Q15 50 30 54 L52 52 Q70 54 75 64Z" fill="#dadada"/>
<path d="M23 30 Q22 8 36 8 Q50 8 50 30Z" fill="#d8d4d0"/>
<g fill="#9a9098" opacity="0.6"><rect x="26" y="14" width="4" height="3"/><rect x="34" y="12" width="4" height="3"/><rect x="42" y="18" width="4" height="3"/><rect x="30" y="22" width="4" height="3"/><rect x="40" y="24" width="3" height="3"/></g>
<path d="M24 30 H50 L49 48 Q46 57 37 57 Q27 57 25 48Z" fill="#c49a7c"/>
<path d="M31 37 H36 M39 37 H44" stroke="#4a3020" stroke-width="1.3"/>
<path d="M31 47 Q37 45 43 47" stroke="#3a2418" stroke-width="1.6" fill="none"/>
<rect x="42" y="60" width="2" height="4" fill="#a02020"/>
</svg>
<svg class="a" style="left:1738px;top:510px" width="163" height="64" viewBox="0 0 163 64">
<defs><filter id="blr" x="-20%" y="-20%" width="140%" height="140%"><feGaussianBlur stdDeviation="3"/></filter></defs>
<rect width="163" height="64" fill="#030303"/>
<path d="M0 64 V6 Q12 0 24 10 Q40 6 52 8 Q66 0 88 8 Q96 26 118 32 Q140 30 150 36 L163 34 V64Z" fill="#5a5a5e" filter="url(#blr)" opacity="0.85"/>
<path d="M0 64 V32 Q6 26 20 28 Q34 30 37 64Z" fill="#181c2c"/>
<rect x="3" y="30" width="10" height="34" fill="#c8d4e8"/>
<path d="M7 32 L12 60" stroke="#2a5aa8" stroke-width="0.8"/>
<rect x="14" y="40" width="7" height="3" fill="#c02020"/>
<path d="M5 12 Q5 2 12 2 Q20 2 20 12Z" fill="#0a0a14"/>
<path d="M7 12 H20 L19.5 24 Q17 29 13 29 Q9 29 8 24Z" fill="#9a7060"/>
<path d="M21 14 Q27 10 33 14 L33 26 Q30 30 27 30 Q23 28 21 24Z" fill="#a88070"/>
<rect x="21.5" y="18" width="11" height="3" fill="#111"/>
<path d="M35 64 V36 Q45 28 60 30 Q74 34 76 64Z" fill="#121834"/>
<path d="M45 30 L50 62 L56 30Z" fill="#6a98d8"/>
<path d="M40 14 Q41 8 48 8 Q56 8 56 14 V26 Q54 32 48 32 Q42 32 41 26Z" fill="#a06a50"/>
<path d="M40 14 Q42 8 48 8 Q55 8 56 14 L56 12 Q54 6 48 6 Q42 6 40 12Z" fill="#0a0a10"/>
<path d="M68 64 V40 Q80 30 96 32 Q115 34 127 50 L130 64Z" fill="#9aaac8"/>
<path d="M78 34 L84 50 L90 34Z" fill="#e8ecf4"/>
<path d="M69 20 Q69 6 78 6 Q87 6 87 20Z" fill="#0c0c16"/>
<path d="M71 20 H87 L87 32 Q84 38 79 38 Q73 38 71 32Z" fill="#b89078"/>
<path d="M72 23 H78 M80 23 H86" stroke="#ddd" stroke-width="1.2"/>
<rect x="70" y="54" width="34" height="10" fill="#e4e4e4"/><rect x="88" y="55" width="5" height="9" fill="#d01818"/>
<path d="M93 40 Q99 36 103 40 L102 46 L94 46Z" fill="#a07058"/>
<path d="M121 46 Q121 38 128 38 Q135 38 135 46Z" fill="#3a4258"/>
<path d="M122 46 H135 L134 56 Q131 60 128 60 Q124 60 123 56Z" fill="#9a7060"/>
<path d="M118 64 Q122 58 140 60 L142 64Z" fill="#6a7088"/>
<path d="M154 44 Q156 36 163 36 V64 H150Z" fill="#2a3040"/><path d="M156 44 H163 V58 Q158 58 157 54Z" fill="#a87a60"/>
<text x="28" y="8.5" font-size="10.5" font-weight="bold" fill="#f01818" font-family="Liberation Serif" textLength="108" lengthAdjust="spacingAndGlyphs">BUDGET 2082/83</text>
</svg>
<svg class="a" style="left:1738px;top:587px" width="163" height="64" viewBox="0 0 163 64">
<defs><linearGradient id="g5" x1="0" y1="0" x2="1" y2="0"><stop offset="0" stop-color="#e6dcea"/><stop offset="0.3" stop-color="#eeeaee"/><stop offset="1" stop-color="#f1f1f1"/></linearGradient></defs>
<rect width="163" height="64" fill="url(#g5)"/>
<path d="M16 8 V27 H38" fill="none" stroke="#a8a8b0" stroke-width="0.8"/>
<path d="M18 27 L21 16 L24 27Z" fill="#e88a40"/><path d="M23 27 L26 11 L29 27Z" fill="#a8b8c8"/>
<text x="38.5" y="21.5" font-size="16.5" font-weight="bold" fill="#58585c" font-family="Liberation Sans" letter-spacing="-0.9" textLength="73" lengthAdjust="spacingAndGlyphs">FINANCIAL</text>
<text x="35" y="40.3" font-size="15.5" font-weight="bold" fill="#58585c" font-family="Liberation Sans" textLength="88.5" lengthAdjust="spacingAndGlyphs">DERIVATIVES</text>
<path d="M98 0 H112 L109 6 H101Z" fill="#74b8aa"/>
<g fill="none" stroke="#e0a878" stroke-width="0.7" stroke-dasharray="1.2 1.2"><path d="M88 7 H110 L116 14 L110 22 L100 22"/><path d="M112 8 L130 8 L136 16 L130 26 L122 26"/><path d="M138 8 L150 8"/><path d="M4 60 H20 L26 52 L34 52 L40 60 L52 60 L58 48 L66 48 L72 60 L86 60 L92 50 L100 50 L106 60"/><path d="M10 44 H20"/><path d="M100 52 H118"/><path d="M26 34 L20 44 L26 52"/></g>
<text x="27" y="46.5" font-size="9" fill="#3a3a48" font-family="Liberation Sans">$</text>
<path d="M136 49 L136 36 A13 13 0 0 0 124 54Z" fill="#e0703a"/>
<path d="M136 49 L124 54 A13 13 0 0 0 150 57Z" fill="#74b8aa"/>
<path d="M136 49 L150 57 A13 13 0 0 0 151 44Z" fill="#f2d8c0"/>
<path d="M142 36 A13 13 0 0 1 151 44" fill="none" stroke="#333" stroke-width="0.8" stroke-dasharray="1 1"/>
<circle cx="96" cy="59" r="5" fill="#1e3a6e"/><rect x="94" y="56.5" width="4" height="5" fill="#fff"/>
<rect x="74" y="48" width="13" height="5" fill="none" stroke="#e0803a" stroke-width="0.9"/>
<path d="M42 52 Q44 48 48 50" fill="none" stroke="#40a0b0" stroke-width="1.2"/><path d="M48 50 Q50 54 46 56" fill="none" stroke="#e0803a" stroke-width="1.2"/>
<rect x="140" y="12" width="14" height="4" fill="#f0c0a0"/><circle cx="154" cy="16" r="1.5" fill="#e0703a"/>
<path d="M137 18 V24 M140 16 V24 M143 18 V24" stroke="#e09040" stroke-width="1.4"/>
<ellipse cx="13" cy="50" rx="3" ry="2" fill="#e8c8a0"/>
<path d="M60 62 Q60 56 64 56 L64 64Z" fill="#1e3a6e"/>
</svg>

<div class="a" style="left:606.40px;top:709.18px;font-size:24px;line-height:31px;color:#0f172a;font-weight:bold;letter-spacing:0.090px;">Sub Indices</div>
<div class="a" style="left:602px;top:741px;width:639px;height:1px;background:#e5e7eb;"></div>
<div class="a" style="left:602px;top:750px;width:639px;height:35px;background:#e5e7eb;"></div>
<div class="a" style="left:618.50px;top:756.61px;font-size:17px;line-height:22px;color:#111111;letter-spacing:1.173px;-webkit-text-stroke:0.35px #111111;">Sector</div>
<div class="a" style="left:900.80px;top:756.61px;font-size:17px;line-height:22px;color:#111111;letter-spacing:1.156px;-webkit-text-stroke:0.35px #111111;">Current.V</div>
<div class="a" style="left:1067.90px;top:756.61px;font-size:17px;line-height:22px;color:#111111;letter-spacing:1.143px;-webkit-text-stroke:0.35px #111111;">Change (%)</div>
<svg class="a" style="left:996.6px;top:761.5px" width="9" height="14"><path d="M4.5 0.3 L8.7 5.3 H0.3Z M4.5 13.7 L8.7 8.7 H0.3Z" fill="#111"/></svg>
<svg class="a" style="left:1182.5px;top:761.5px" width="9" height="14"><path d="M4.5 0.3 L8.7 5.3 H0.3Z M4.5 13.7 L8.7 8.7 H0.3Z" fill="#111"/></svg>
<div class="a" style="left:618.50px;top:792.73px;font-size:15.2px;line-height:20px;color:#111111;letter-spacing:-0.179px;-webkit-text-stroke:0.15px #111111;">Micro Finance</div>
<div class="a" style="left:900.80px;top:792.73px;font-size:15.2px;line-height:20px;color:#111111;letter-spacing:-0.191px;-webkit-text-stroke:0.15px #111111;">4,824.5</div>
<div class="a" style="left:1067.90px;top:792.73px;font-size:15.2px;line-height:20px;color:#ef4444;letter-spacing:-0.199px;-webkit-text-stroke:0.1px #ef4444;">-0.7 %</div>
<div class="a" style="left:602px;top:821px;width:639px;height:36px;background:#f3f4f6;"></div>
<div class="a" style="left:618.50px;top:828.63px;font-size:15.2px;line-height:20px;color:#111111;letter-spacing:-0.166px;-webkit-text-stroke:0.15px #111111;">Life Insurance</div>
<div class="a" style="left:900.80px;top:828.63px;font-size:15.2px;line-height:20px;color:#111111;letter-spacing:-0.191px;-webkit-text-stroke:0.15px #111111;">13,218.9</div>
<div class="a" style="left:1067.90px;top:828.63px;font-size:15.2px;line-height:20px;color:#ef4444;letter-spacing:-0.197px;-webkit-text-stroke:0.1px #ef4444;">-0.93 %</div>
<div class="a" style="left:618.50px;top:864.53px;font-size:15.2px;line-height:20px;color:#111111;letter-spacing:-0.190px;-webkit-text-stroke:0.15px #111111;">Mutual Fund</div>
<div class="a" style="left:900.80px;top:864.53px;font-size:15.2px;line-height:20px;color:#111111;letter-spacing:-0.214px;-webkit-text-stroke:0.15px #111111;">19.61</div>
<div class="a" style="left:1067.90px;top:864.53px;font-size:15.2px;line-height:20px;color:#1fab2c;letter-spacing:-0.214px;-webkit-text-stroke:0.1px #1fab2c;">0.07 %</div>
<div class="a" style="left:602px;top:893px;width:639px;height:36px;background:#f3f4f6;"></div>
<div class="a" style="left:618.50px;top:900.43px;font-size:15.2px;line-height:20px;color:#111111;letter-spacing:-0.187px;-webkit-text-stroke:0.15px #111111;">Investment</div>
<div class="a" style="left:900.80px;top:900.43px;font-size:15.2px;line-height:20px;color:#111111;letter-spacing:-0.202px;-webkit-text-stroke:0.15px #111111;">111.1</div>
<div class="a" style="left:1067.90px;top:900.43px;font-size:15.2px;line-height:20px;color:#ef4444;letter-spacing:-0.197px;-webkit-text-stroke:0.1px #ef4444;">-0.76 %</div>
<div class="a" style="left:618.50px;top:936.33px;font-size:15.2px;line-height:20px;color:#111111;letter-spacing:-0.192px;-webkit-text-stroke:0.15px #111111;">Commercial Banks</div>
<div class="a" style="left:900.80px;top:936.33px;font-size:15.2px;line-height:20px;color:#111111;letter-spacing:-0.191px;-webkit-text-stroke:0.15px #111111;">1,393.24</div>
<div class="a" style="left:1067.90px;top:936.33px;font-size:15.2px;line-height:20px;color:#ef4444;letter-spacing:-0.197px;-webkit-text-stroke:0.1px #ef4444;">-0.79 %</div>
<div class="a" style="left:602px;top:964px;width:639px;height:36px;background:#f3f4f6;"></div>
<div class="a" style="left:618.50px;top:972.23px;font-size:15.2px;line-height:20px;color:#111111;letter-spacing:-0.173px;-webkit-text-stroke:0.15px #111111;">Hotels And Tourism</div>
<div class="a" style="left:900.80px;top:972.23px;font-size:15.2px;line-height:20px;color:#111111;letter-spacing:-0.191px;-webkit-text-stroke:0.15px #111111;">6,798.07</div>
<div class="a" style="left:1067.90px;top:972.23px;font-size:15.2px;line-height:20px;color:#1fab2c;letter-spacing:-0.214px;-webkit-text-stroke:0.1px #1fab2c;">0.61 %</div>
<div class="a" style="left:618.50px;top:1008.13px;font-size:15.2px;line-height:20px;color:#111111;letter-spacing:-0.206px;-webkit-text-stroke:0.15px #111111;">Others</div>
<div class="a" style="left:900.80px;top:1008.13px;font-size:15.2px;line-height:20px;color:#111111;letter-spacing:-0.191px;-webkit-text-stroke:0.15px #111111;">2,375.67</div>
<div class="a" style="left:1067.90px;top:1008.13px;font-size:15.2px;line-height:20px;color:#ef4444;letter-spacing:-0.197px;-webkit-text-stroke:0.1px #ef4444;">-0.15 %</div>
<div class="a" style="left:602px;top:1036px;width:639px;height:36px;background:#f3f4f6;"></div>
<div class="a" style="left:618.50px;top:1044.03px;font-size:15.2px;line-height:20px;color:#111111;letter-spacing:-0.198px;-webkit-text-stroke:0.15px #111111;">Hydro Power</div>
<div class="a" style="left:900.80px;top:1044.03px;font-size:15.2px;line-height:20px;color:#111111;letter-spacing:-0.191px;-webkit-text-stroke:0.15px #111111;">3,531.8</div>
<div class="a" style="left:1067.90px;top:1044.03px;font-size:15.2px;line-height:20px;color:#ef4444;letter-spacing:-0.197px;-webkit-text-stroke:0.1px #ef4444;">-1.02 %</div>
<div class="a" style="left:1257.5px;top:709.7px;width:69.0px;height:28.5px;background:#000;border-radius:7px"></div>
<div class="a" style="left:1266.80px;top:714.07px;font-size:14.8px;line-height:19px;color:#ffffff;letter-spacing:-0.137px;-webkit-text-stroke:0.25px #ffffff;">Gainers</div>
<div class="a" style="left:1339.4px;top:709.7px;width:62.399999999999864px;height:28.5px;background:#fff;border:1px solid #aeb4bf;border-radius:7px"></div>
<div class="a" style="left:1348.30px;top:714.07px;font-size:14.8px;line-height:19px;color:#111111;letter-spacing:-0.024px;-webkit-text-stroke:0.25px #111111;">Losers</div>
<div class="a" style="left:1414.3px;top:709.7px;width:67.29999999999995px;height:28.5px;background:#fff;border:1px solid #aeb4bf;border-radius:7px"></div>
<div class="a" style="left:1423.50px;top:714.07px;font-size:14.8px;line-height:19px;color:#111111;letter-spacing:-0.013px;-webkit-text-stroke:0.25px #111111;">Volume</div>
<div class="a" style="left:1494.4px;top:709.7px;width:96.59999999999991px;height:28.5px;background:#fff;border:1px solid #aeb4bf;border-radius:7px"></div>
<div class="a" style="left:1504.00px;top:714.07px;font-size:14.8px;line-height:19px;color:#111111;letter-spacing:0.072px;-webkit-text-stroke:0.25px #111111;">Transaction</div>
<div class="a" style="left:1603px;top:709.7px;width:77.59999999999991px;height:28.5px;background:#fff;border:1px solid #aeb4bf;border-radius:7px"></div>
<div class="a" style="left:1612.80px;top:714.07px;font-size:14.8px;line-height:19px;color:#111111;letter-spacing:0.047px;-webkit-text-stroke:0.25px #111111;">Turnover</div>
<div class="a" style="left:1253px;top:751px;width:656px;height:35px;background:#e5e7eb;"></div>
<div class="a" style="left:1299.00px;top:757.71px;font-size:17.3px;line-height:22px;color:#111111;letter-spacing:1.142px;-webkit-text-stroke:0.35px #111111;">Symbol</div>
<div class="a" style="left:1438.60px;top:757.71px;font-size:17.3px;line-height:22px;color:#111111;letter-spacing:-0.022px;-webkit-text-stroke:0.35px #111111;">LTP</div>
<div class="a" style="left:1567.00px;top:757.71px;font-size:17.3px;line-height:22px;color:#111111;letter-spacing:0.999px;-webkit-text-stroke:0.35px #111111;">Change</div>
<div class="a" style="left:1747.90px;top:757.71px;font-size:17.3px;line-height:22px;color:#111111;letter-spacing:0.958px;-webkit-text-stroke:0.35px #111111;">% Change</div>
<svg class="a" style="left:1482.3px;top:762.5px" width="9" height="14"><path d="M4.5 0.3 L8.7 5.3 H0.3Z M4.5 13.7 L8.7 8.7 H0.3Z" fill="#111"/></svg>
<svg class="a" style="left:1645.9px;top:762.5px" width="9" height="14"><path d="M4.5 0.3 L8.7 5.3 H0.3Z M4.5 13.7 L8.7 8.7 H0.3Z" fill="#111"/></svg>
<svg class="a" style="left:1848.3px;top:762.5px" width="9" height="14"><path d="M4.5 0.3 L8.7 5.3 H0.3Z M4.5 13.7 L8.7 8.7 H0.3Z" fill="#111"/></svg>
<div class="a" style="left:1306.30px;top:794.53px;font-size:15.2px;line-height:20px;color:#111111;letter-spacing:-0.529px;-webkit-text-stroke:0.15px #111111;">MMKJL</div>
<div class="a" style="left:1449.30px;top:794.53px;font-size:15.2px;line-height:20px;color:#1fab2c;letter-spacing:-0.379px;-webkit-text-stroke:0.1px #1fab2c;">611.9</div>
<div class="a" style="left:1594.56px;top:794.53px;font-size:15.2px;line-height:20px;color:#111111;letter-spacing:-0.390px;-webkit-text-stroke:0.15px #111111;">37.83</div>
<div class="a" style="left:1780.81px;top:794.53px;font-size:15.2px;line-height:20px;color:#111111;letter-spacing:-0.389px;-webkit-text-stroke:0.15px #111111;">6.59 %</div>
<div class="a" style="left:1253px;top:822px;width:656px;height:36px;background:#f3f4f6;"></div>
<div class="a" style="left:1307.91px;top:830.53px;font-size:15.2px;line-height:20px;color:#111111;letter-spacing:-0.494px;-webkit-text-stroke:0.15px #111111;">SBD89</div>
<div class="a" style="left:1450.79px;top:830.53px;font-size:15.2px;line-height:20px;color:#1fab2c;letter-spacing:-0.462px;-webkit-text-stroke:0.1px #1fab2c;">1205</div>
<div class="a" style="left:1604.69px;top:830.53px;font-size:15.2px;line-height:20px;color:#111111;letter-spacing:-0.694px;-webkit-text-stroke:0.15px #111111;">50</div>
<div class="a" style="left:1780.81px;top:830.53px;font-size:15.2px;line-height:20px;color:#111111;letter-spacing:-0.389px;-webkit-text-stroke:0.15px #111111;">4.33 %</div>
<div class="a" style="left:1313.18px;top:866.53px;font-size:15.2px;line-height:20px;color:#111111;letter-spacing:-0.509px;-webkit-text-stroke:0.15px #111111;">GMLI</div>
<div class="a" style="left:1450.79px;top:866.53px;font-size:15.2px;line-height:20px;color:#1fab2c;letter-spacing:-0.462px;-webkit-text-stroke:0.1px #1fab2c;">2360</div>
<div class="a" style="left:1594.56px;top:866.53px;font-size:15.2px;line-height:20px;color:#111111;letter-spacing:-0.390px;-webkit-text-stroke:0.15px #111111;">84.73</div>
<div class="a" style="left:1780.81px;top:866.53px;font-size:15.2px;line-height:20px;color:#111111;letter-spacing:-0.389px;-webkit-text-stroke:0.15px #111111;">3.72 %</div>
<div class="a" style="left:1253px;top:894px;width:656px;height:36px;background:#f3f4f6;"></div>
<div class="a" style="left:1298.59px;top:902.53px;font-size:15.2px;line-height:20px;color:#111111;letter-spacing:-0.462px;-webkit-text-stroke:0.15px #111111;">MLBLD89</div>
<div class="a" style="left:1450.79px;top:902.53px;font-size:15.2px;line-height:20px;color:#1fab2c;letter-spacing:-0.462px;-webkit-text-stroke:0.1px #1fab2c;">1250</div>
<div class="a" style="left:1604.69px;top:902.53px;font-size:15.2px;line-height:20px;color:#111111;letter-spacing:-0.694px;-webkit-text-stroke:0.15px #111111;">44</div>
<div class="a" style="left:1780.81px;top:902.53px;font-size:15.2px;line-height:20px;color:#111111;letter-spacing:-0.389px;-webkit-text-stroke:0.15px #111111;">3.65 %</div>
<div class="a" style="left:1310.75px;top:938.53px;font-size:15.2px;line-height:20px;color:#111111;letter-spacing:-0.578px;-webkit-text-stroke:0.15px #111111;">MKHL</div>
<div class="a" style="left:1448.76px;top:938.53px;font-size:15.2px;line-height:20px;color:#1fab2c;letter-spacing:-0.390px;-webkit-text-stroke:0.1px #1fab2c;">791.4</div>
<div class="a" style="left:1594.56px;top:938.53px;font-size:15.2px;line-height:20px;color:#111111;letter-spacing:-0.390px;-webkit-text-stroke:0.15px #111111;">27.77</div>
<div class="a" style="left:1780.81px;top:938.53px;font-size:15.2px;line-height:20px;color:#111111;letter-spacing:-0.389px;-webkit-text-stroke:0.15px #111111;">3.64 %</div>
<div class="a" style="left:1253px;top:966px;width:656px;height:36px;background:#f3f4f6;"></div>
<div class="a" style="left:1306.30px;top:974.53px;font-size:15.2px;line-height:20px;color:#111111;letter-spacing:-0.528px;-webkit-text-stroke:0.15px #111111;">CREST</div>
<div class="a" style="left:1450.79px;top:974.53px;font-size:15.2px;line-height:20px;color:#1fab2c;letter-spacing:-0.462px;-webkit-text-stroke:0.1px #1fab2c;">1402</div>
<div class="a" style="left:1594.56px;top:974.53px;font-size:15.2px;line-height:20px;color:#111111;letter-spacing:-0.390px;-webkit-text-stroke:0.15px #111111;">48.62</div>
<div class="a" style="left:1780.81px;top:974.53px;font-size:15.2px;line-height:20px;color:#111111;letter-spacing:-0.389px;-webkit-text-stroke:0.15px #111111;">3.59 %</div>
<div class="a" style="left:1309.14px;top:1010.53px;font-size:15.2px;line-height:20px;color:#111111;letter-spacing:-0.624px;-webkit-text-stroke:0.15px #111111;">BGWT</div>
<div class="a" style="left:1454.84px;top:1010.53px;font-size:15.2px;line-height:20px;color:#1fab2c;letter-spacing:-0.520px;-webkit-text-stroke:0.1px #1fab2c;">977</div>
<div class="a" style="left:1594.56px;top:1010.53px;font-size:15.2px;line-height:20px;color:#111111;letter-spacing:-0.390px;-webkit-text-stroke:0.15px #111111;">33.69</div>
<div class="a" style="left:1780.81px;top:1010.53px;font-size:15.2px;line-height:20px;color:#111111;letter-spacing:-0.389px;-webkit-text-stroke:0.15px #111111;">3.57 %</div>
<div class="a" style="left:1253px;top:1038px;width:656px;height:36px;background:#f3f4f6;"></div>
<div class="a" style="left:1319.66px;top:1046.53px;font-size:15.2px;line-height:20px;color:#111111;letter-spacing:-0.485px;-webkit-text-stroke:0.15px #111111;">IHL</div>
<div class="a" style="left:1454.84px;top:1046.53px;font-size:15.2px;line-height:20px;color:#1fab2c;letter-spacing:-0.520px;-webkit-text-stroke:0.1px #1fab2c;">561</div>
<div class="a" style="left:1594.56px;top:1046.53px;font-size:15.2px;line-height:20px;color:#111111;letter-spacing:-0.390px;-webkit-text-stroke:0.15px #111111;">18.26</div>
<div class="a" style="left:1780.81px;top:1046.53px;font-size:15.2px;line-height:20px;color:#111111;letter-spacing:-0.389px;-webkit-text-stroke:0.15px #111111;">3.36 %</div>
</div>
</body></html>
